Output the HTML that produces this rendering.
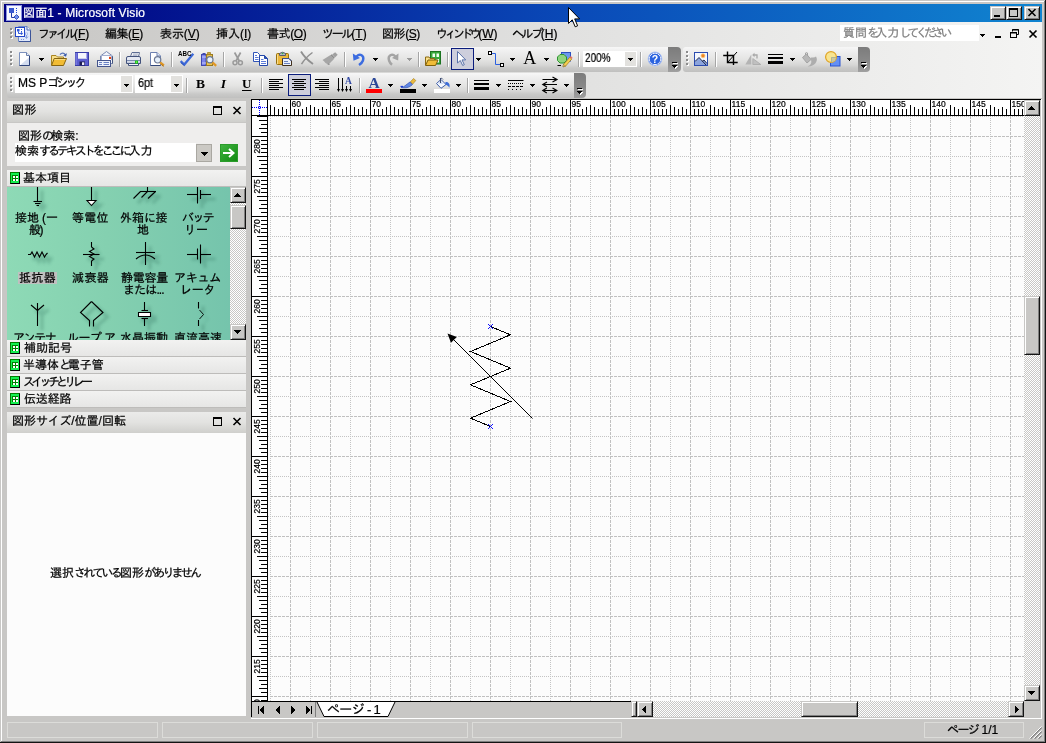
<!DOCTYPE html>
<html lang="ja"><head><meta charset="utf-8"><title>図面1 - Microsoft Visio</title>
<style>
*{box-sizing:border-box;margin:0;padding:0}
html,body{width:1046px;height:743px;overflow:hidden;background:#c8c7c5}
body{position:relative;font-family:"Liberation Sans","IPAGothic",sans-serif;font-size:12px;line-height:12px;color:#000}
.a{position:absolute}
.t{position:absolute;white-space:nowrap;height:12px;line-height:12px;will-change:transform;-webkit-text-stroke-width:.22px}
svg{position:absolute;overflow:visible;will-change:transform}
.btn{position:absolute;background:#c8c7c5;border:1px solid;border-color:#c8c7c5 #141414 #141414 #c8c7c5;box-shadow:inset 1px 1px 0 #fff,inset -1px -1px 0 #808080}
.chk{background-color:#fff;background-image:conic-gradient(#c8c7c5 25%,#fff 0 50%,#c8c7c5 0 75%,#fff 0);background-size:2px 2px}
.tb{position:absolute;height:25px;border-radius:3px 0 0 3px;background:linear-gradient(#f7f7f7 0,#f0f0f0 15%,#e4e4e3 50%,#d6d6d5 72%,#c9c9c8 84%,#c0c0bf 100%)}
.cap{position:absolute;height:25px;border-radius:0 4px 4px 0;background:linear-gradient(#7c7c7c,#8a8a8a 60%,#a0a0a0)}
.sep{position:absolute;width:1px;height:15px;background:#a6a6a6;box-shadow:1px 0 0 #fff}
.grip i{position:absolute;left:0;width:2px;height:2px;background:#8c8c8c;box-shadow:1px 1px 0 #fff}
.sel{position:absolute;border:1px solid #0a1c7c;background:#cdcedc}
.ptitle{position:absolute;height:21px;background:linear-gradient(#ebebea,#e2e2e0 50%,#cfcfcc)}
.shdr{position:absolute;left:7px;width:239px;height:16px;background:linear-gradient(#f2f2f1,#e6e6e5)}
.lbl{position:absolute;width:60px;text-align:center;line-height:12px;white-space:nowrap}
.sp{position:absolute;height:16px;border:1px solid #dcdcd9}
</style></head>
<body>
<div class="a" style="left:1px;top:1px;width:1043px;height:1px;background:#fff"></div>
<div class="a" style="left:1px;top:1px;width:1px;height:740px;background:#fff"></div>
<div class="a" style="left:1044px;top:1px;width:1px;height:741px;background:#808080"></div>
<div class="a" style="left:1px;top:741px;width:1044px;height:1px;background:#808080"></div>
<div class="a" style="left:1045px;top:0px;width:1px;height:743px;background:#141414"></div>
<div class="a" style="left:0px;top:742px;width:1046px;height:1px;background:#141414"></div>
<div class="a" style="left:4px;top:4px;width:1038px;height:18px;background:linear-gradient(to right,#000080 0,#000080 2%,#0a4ab8 55%,#1084d0 100%)"></div>
<svg style="left:6px;top:5px" width="16" height="16" viewBox="0 0 16 16"><rect x="0" y="0" width="16" height="16" fill="#8c94e0"/><rect x="1" y="1" width="14" height="14" fill="#f6f8ff"/><rect x="3" y="3" width="5" height="5" fill="#3858d0"/><path d="M5.5 8V12.5H9" stroke="#2038a8" fill="none"/><path d="M10.500 3V9" stroke="#2048d8" stroke-dasharray="1 1"/><path d="M10.500 9.500L13 12L10.500 14.500L8 12Z" fill="#6c8cf0" stroke="#2038a8" stroke-width=".8"/></svg>
<div class="t" id="title" style="left:23px;top:7px;letter-spacing:0.14px;color:#fff;">図面1 - Microsoft Visio</div>
<div class="btn" style="left:990px;top:6px;width:16px;height:14px;"></div>
<div class="btn" style="left:1006px;top:6px;width:16px;height:14px;"></div>
<div class="btn" style="left:1024px;top:6px;width:16px;height:14px;"></div>
<div class="a" style="left:994px;top:15px;width:6px;height:2px;background:#000"></div>
<div class="a" style="left:1009px;top:8px;width:9px;height:9px;border:1px solid #000;border-top-width:2px"></div>
<svg style="left:1028px;top:9px" width="8" height="7"><path d="M0.5 0 L7.5 7 M7.5 0 L0.5 7" stroke="#000" stroke-width="1.6" fill="none"/></svg>
<div class="a" style="left:4px;top:22px;width:1038px;height:76px;background:linear-gradient(to right,#c8c7c5 0,#cbcac8 8%,#e0e0df 52%,#f4f4f3 100%)"></div>
<div class="a grip" style="left:10px;top:28px;width:3px;height:12px"><i style="top:0px"></i><i style="top:4px"></i><i style="top:8px"></i></div>
<svg style="left:15px;top:26px" width="16" height="16" viewBox="0 0 16 16"><path d="M3.500 0.500H12L15.500 4V15.500H3.500Z" fill="#dfe8fb" stroke="#6c88c8"/><path d="M12 0.500V4H15.500" fill="#f4f8ff" stroke="#4c68b0"/><path d="M4 15.500H15.500V4.500" stroke="#3c5498" fill="none"/><path d="M11.500 7V12M10 10.500L11.500 12.500L13 10.500" stroke="#8ca4dc" fill="none"/><rect x="10.500" y="7" width="2" height="2" fill="#fff" stroke="#8ca4dc" stroke-width=".6"/><path d="M6 13.500H9" stroke="#7c98d8" stroke-dasharray="1 1"/><rect x="0.500" y="1.500" width="9" height="9" fill="#fff" stroke="#2346c8"/><rect x="2" y="3" width="2.500" height="2.500" fill="#2c56d8"/><path d="M3.500 5.500V7.500H5.500" stroke="#2c56d8" fill="none"/><path d="M6.500 6L8 7.500L6.500 9L5 7.500Z" fill="#2c56d8"/><path d="M6.500 3V6" stroke="#2c56d8" stroke-dasharray="1 1"/></svg>
<div class="t" id="m1" style="left:38px;top:28px;"><span style="letter-spacing:-3.02px">ファイル</span>(<u>F</u>)</div>
<div class="t" id="m2" style="left:105px;top:28px;letter-spacing:-0.44px;">編集(<u>E</u>)</div>
<div class="t" id="m3" style="left:160px;top:28px;letter-spacing:-0.07px;">表示(<u>V</u>)</div>
<div class="t" id="m4" style="left:216px;top:28px;">挿入(<u>I</u>)</div>
<div class="t" id="m5" style="left:267px;top:28px;letter-spacing:-0.43px;">書式(<u>O</u>)</div>
<div class="t" id="m6" style="left:322px;top:28px;"><span style="letter-spacing:-2.24px">ツール</span>(<u>T</u>)</div>
<div class="t" id="m7" style="left:382px;top:28px;letter-spacing:-0.43px;">図形(<u>S</u>)</div>
<div class="t" id="m8" style="left:436px;top:28px;"><span style="letter-spacing:-3.56px">ウィンドウ</span>(<u>W</u>)</div>
<div class="t" id="m9" style="left:512px;top:28px;"><span style="letter-spacing:-2.43px">ヘルプ</span>(<u>H</u>)</div>
<div class="a" style="left:840px;top:25px;width:139px;height:16px;background:#fff"></div>
<div class="t" id="ask" style="left:843px;top:27px;color:#808080">質問<span style="letter-spacing:-3.77px">を</span>入力<span style="letter-spacing:-3.77px">してください</span></div>
<div class="a" style="left:980px;top:33.5px;width:5px;height:1px;background:#000"></div><div class="a" style="left:981px;top:34.5px;width:3px;height:1px;background:#000"></div><div class="a" style="left:982px;top:35.5px;width:1px;height:1px;background:#000"></div>
<div class="a" style="left:995px;top:36px;width:6px;height:2px;background:#000"></div>
<svg style="left:1010px;top:29px" width="9" height="9"><path d="M2.5 2.5V0.5H8.5V5.5H6.5" stroke="#000" fill="none"/><path d="M2 1H9" stroke="#000"/><rect x="0.5" y="3.5" width="6" height="5" stroke="#000" fill="none"/><path d="M0 4H7" stroke="#000"/></svg>
<svg style="left:1029px;top:30px" width="8" height="8"><path d="M0.5 0.5 L7.5 7.5 M7.5 0.5 L0.5 7.5" stroke="#000" stroke-width="1.7" fill="none"/></svg>
<div class="tb" style="left:7px;top:47px;width:661px;height:25px;"></div><div class="cap" style="left:668px;top:47px;width:13px;height:25px;"></div><div class="a" style="left:672.5px;top:63px;width:5px;height:1px;background:#fff"></div><div class="a" style="left:672.5px;top:66px;width:5px;height:1px;background:#fff"></div><div class="a" style="left:673.5px;top:67px;width:3px;height:1px;background:#fff"></div><div class="a" style="left:674.5px;top:68px;width:1px;height:1px;background:#fff"></div><div class="a" style="left:671.5px;top:62px;width:5px;height:1px;background:#000"></div><div class="a" style="left:671.5px;top:65px;width:5px;height:1px;background:#000"></div><div class="a" style="left:672.5px;top:66px;width:3px;height:1px;background:#000"></div><div class="a" style="left:673.5px;top:67px;width:1px;height:1px;background:#000"></div>
<div class="tb" style="left:683px;top:47px;width:175px;height:25px;"></div><div class="cap" style="left:858px;top:47px;width:12px;height:25px;"></div><div class="a" style="left:862px;top:63px;width:5px;height:1px;background:#fff"></div><div class="a" style="left:862px;top:66px;width:5px;height:1px;background:#fff"></div><div class="a" style="left:863px;top:67px;width:3px;height:1px;background:#fff"></div><div class="a" style="left:864px;top:68px;width:1px;height:1px;background:#fff"></div><div class="a" style="left:861px;top:62px;width:5px;height:1px;background:#000"></div><div class="a" style="left:861px;top:65px;width:5px;height:1px;background:#000"></div><div class="a" style="left:862px;top:66px;width:3px;height:1px;background:#000"></div><div class="a" style="left:863px;top:67px;width:1px;height:1px;background:#000"></div>
<div class="tb" style="left:7px;top:73px;width:567px;height:25px;"></div><div class="cap" style="left:574px;top:73px;width:12px;height:25px;"></div><div class="a" style="left:578px;top:89px;width:5px;height:1px;background:#fff"></div><div class="a" style="left:578px;top:92px;width:5px;height:1px;background:#fff"></div><div class="a" style="left:579px;top:93px;width:3px;height:1px;background:#fff"></div><div class="a" style="left:580px;top:94px;width:1px;height:1px;background:#fff"></div><div class="a" style="left:577px;top:88px;width:5px;height:1px;background:#000"></div><div class="a" style="left:577px;top:91px;width:5px;height:1px;background:#000"></div><div class="a" style="left:578px;top:92px;width:3px;height:1px;background:#000"></div><div class="a" style="left:579px;top:93px;width:1px;height:1px;background:#000"></div>
<div class="a grip" style="left:10px;top:51px;width:3px;height:16px"><i style="top:0px"></i><i style="top:4px"></i><i style="top:8px"></i><i style="top:12px"></i></div>
<div class="a grip" style="left:686px;top:51px;width:3px;height:16px"><i style="top:0px"></i><i style="top:4px"></i><i style="top:8px"></i><i style="top:12px"></i></div>
<div class="a grip" style="left:10px;top:77px;width:3px;height:16px"><i style="top:0px"></i><i style="top:4px"></i><i style="top:8px"></i><i style="top:12px"></i></div>
<div class="sel" style="left:451px;top:48px;width:23px;height:22px;"></div>
<svg style="left:17px;top:52px" width="16" height="16" viewBox="0 0 16 16"><path d="M2.500 0.500H9.500L12.500 3.500V13.500H2.500Z" fill="#fff" stroke="#7c90bc"/><path d="M4 12.500L12 5.500V13H4Z" fill="#c4d0ea" opacity=".75"/><path d="M9.500 0.500V3.500H12.500" fill="#e6ecf8" stroke="#6c80ac"/><path d="M2.500 13.500H12.500V4" stroke="#30447a" fill="none"/></svg>
<svg style="left:51px;top:52px" width="16" height="16" viewBox="0 0 16 16"><path d="M0.500 13V3.500H5L6.500 5H12.500V7" fill="#f8e08c" stroke="#a88420"/><path d="M0.500 13.500L3.200 6.500H15.500L12.500 13.500Z" fill="#f2bc34" stroke="#866410"/><path d="M3.600 7.500H14.300" stroke="#f8dc80"/><path d="M9 2.600C10.500 0.400 13.500 0.500 14.600 3" stroke="#5874b8" stroke-width="1.200" fill="none"/><path d="M16 1.200L15 4.800L12.200 3.300Z" fill="#3858a8"/></svg>
<svg style="left:74px;top:52px" width="16" height="16" viewBox="0 0 16 16"><rect x="1.500" y="0.500" width="13" height="13" fill="#5c5ed0" stroke="#383ca8"/><path d="M2 1V13" stroke="#8c8ee8"/><rect x="4" y="1" width="8.500" height="6" fill="#f4f5fd"/><path d="M4 6.500H12.500" stroke="#c8ccec"/><rect x="5.500" y="9.500" width="5.500" height="4" fill="#1c1c54"/><rect x="8" y="10.300" width="2.300" height="2.700" fill="#eeeefa"/></svg>
<svg style="left:97px;top:51px" width="16" height="16" viewBox="0 0 16 16"><path d="M3.500 5L9.500 0.500L15.500 5V12.500H3.500Z" fill="#f2f5fc" stroke="#7888b0"/><path d="M4.500 9V4.500H14.500V9" fill="#fff" stroke="#a4b0d0"/><rect x="12" y="5.800" width="2" height="2.200" fill="#e84010"/><path d="M15.500 5.500V12.500" stroke="#44547c"/><rect x="0.500" y="9.500" width="13" height="6" fill="#eef2fb" stroke="#44548c"/><path d="M2 11.500H5M2 13.500H5M6.500 11.500H12M6.500 13.500H12" stroke="#6880c4"/></svg>
<svg style="left:126px;top:52px" width="16" height="16" viewBox="0 0 16 16"><path d="M4.500 4.500L6 0.500H13.500L12.500 4.500Z" fill="#fff" stroke="#5c6c94"/><path d="M7 2H12M6.500 3.300H11.500" stroke="#8c98b8" stroke-width=".8"/><path d="M0.500 6Q0.500 4.500 2 4.500H13Q14.500 4.500 14.500 6V11.500H0.500Z" fill="#e4e8f2" stroke="#42527c"/><path d="M1 8.500H14" stroke="#7c8cb0"/><path d="M1 9.500H14V11H1Z" fill="#c4ccdf"/><path d="M2.500 11.500H12.500V13.500H2.500Z" fill="#f4f6fa" stroke="#42527c"/><rect x="9" y="8.600" width="3" height="3" fill="#18c818"/><rect x="10" y="9.600" width="1" height="1" fill="#b8ff70"/></svg>
<svg style="left:149px;top:52px" width="16" height="16" viewBox="0 0 16 16"><path d="M1.500 0.500H8L11.500 4V13.500H1.500Z" fill="#fff" stroke="#6c80b0"/><path d="M8 0.500V4H11.500" fill="#dfe6f4" stroke="#6c80b0"/><path d="M1.500 13.500H11.500" stroke="#34487a"/><circle cx="8.600" cy="7.800" r="3.200" fill="#e6f0fb" stroke="#6c7894" stroke-width="1.200"/><path d="M11.200 10.400L14.800 13.500" stroke="#e09828" stroke-width="2.400"/><path d="M12.500 12.500L14.800 14.300" stroke="#a86c14" stroke-width="1"/></svg>
<svg style="left:178px;top:51px" width="16" height="16" viewBox="0 0 16 16"><path d="M2.600 10.200L6.300 13.500L15.300 2.800" stroke="#3c68d8" stroke-width="2.300" fill="none"/><path d="M3 11.800L6.300 14.500" stroke="#2448a8" stroke-width=".8" fill="none"/><text x="0" y="5.200" font-family="Liberation Sans,sans-serif" font-size="7" font-weight="bold" fill="#000" textLength="13.500" lengthAdjust="spacingAndGlyphs">ABC</text></svg>
<svg style="left:201px;top:52px" width="16" height="16" viewBox="0 0 16 16"><rect x="0.500" y="2.500" width="4.500" height="11" fill="#7c84ec" stroke="#4048b0"/><path d="M1 5H5M1 11H5" stroke="#c4c8fc"/><path d="M1.500 1.500H4.500" stroke="#4048b0"/><rect x="5.500" y="2.500" width="6" height="11" fill="#ecc450" stroke="#9a7a1e"/><path d="M6.500 0.500V3L8 2L9.500 3V0.500Z" fill="#d8b040" stroke="#9a7a1e" stroke-width=".7"/><circle cx="8.900" cy="7.800" r="3.100" fill="#e8f2fc" stroke="#6c7894" stroke-width="1.200"/><path d="M11.400 10.400L15.200 13.800" stroke="#e09828" stroke-width="2.300"/></svg>
<svg style="left:230px;top:52px" width="16" height="16" viewBox="0 0 16 16"><path d="M4.600 0.500L9.300 9M10.600 0.500L6 9" stroke="#9a9a9a" stroke-width="1.700" fill="none"/><circle cx="5" cy="10.800" r="2" fill="none" stroke="#9a9a9a" stroke-width="1.500"/><circle cx="10.400" cy="10.800" r="2" fill="none" stroke="#9a9a9a" stroke-width="1.500"/></svg>
<svg style="left:253px;top:52px" width="16" height="16" viewBox="0 0 16 16"><path d="M0.500 0.500H4.500L6.500 2.500V9.500H0.500Z" fill="#fff" stroke="#3054b8"/><path d="M2 3.500H4M2 5.500H5.500M2 7.500H5.500" stroke="#5a7ad8"/><path d="M6.500 3.500H11.500L14.500 6.500V13.500H6.500Z" fill="#fff" stroke="#2448a8"/><path d="M11.500 3.500V6.500H14.500" fill="#3054b8" stroke="#2448a8"/><path d="M8 7.500H10.500M8 9.500H13M8 11.500H13" stroke="#5a7ad8"/></svg>
<svg style="left:276px;top:52px" width="16" height="16" viewBox="0 0 16 16"><rect x="0.500" y="1.500" width="12" height="11" rx="1" fill="#ecb83c" stroke="#96700c"/><path d="M1.500 2.500V12" stroke="#f8dc8c"/><path d="M3.500 3.500V1.500Q6.500 -1 9.500 1.500V3.500Z" fill="#b8bcc8" stroke="#585c6c"/><rect x="5.800" y="0.800" width="1.500" height="1.400" fill="#30b040"/><path d="M6.500 6.500H13L15.500 9V13.500H6.500Z" fill="#eaf0fb" stroke="#42301c"/><path d="M6.500 6.500H13L15.500 9" fill="none" stroke="#3c5090"/><path d="M8 9.500H12M8 11.500H14" stroke="#6a82c0"/></svg>
<svg style="left:299px;top:51px" width="16" height="16" viewBox="0 0 16 16"><path d="M2 0.500C4 4 9 9.500 14 13" stroke="#909090" stroke-width="1.800" fill="none"/><path d="M13.500 1.500C10 4 5 9 2.500 13.200" stroke="#909090" stroke-width="1.500" fill="none"/></svg>
<svg style="left:322px;top:52px" width="16" height="16" viewBox="0 0 16 16"><path d="M0.500 8L8.500 3L12 7L6 13Q5 11.500 3.500 11Q2 9 0.500 8Z" fill="#a6a6a6"/><path d="M8.500 3.200L9.800 2.300L12.800 5.800L11.800 6.800Z" fill="#8c8c8c"/><path d="M10.200 2.500L13.200 0.200L15.700 2.700L13 5.600Z" fill="#a0a0a0"/><path d="M6 13L8 12.500L6.500 11Z" fill="#8c8c8c"/></svg>
<svg style="left:351px;top:52px" width="16" height="16" viewBox="0 0 16 16"><path d="M5.500 4.500C9 1 13.500 3.500 12 8.500C11.300 10.500 9.500 12 8 13" stroke="#3c6ce0" stroke-width="2.400" fill="none"/><path d="M1.800 1.500L2.500 8.800L9 6Z" fill="#3c6ce0"/></svg>
<svg style="left:385px;top:52px" width="16" height="16" viewBox="0 0 16 16"><path d="M10.500 4.500C7 1 2.500 3.500 4 8.500C4.700 10.500 6 12 7 12.800" stroke="#a4a4a4" stroke-width="2.400" fill="none"/><path d="M13.500 1.500L13.200 8.600L7 6Z" fill="#a4a4a4"/></svg>
<svg style="left:425px;top:50px" width="16" height="16" viewBox="0 0 16 16"><rect x="5.500" y="1.500" width="10" height="12.500" fill="#38a83c" stroke="#1c7420"/><rect x="7.500" y="3.500" width="2.500" height="3.500" fill="#effff0"/><rect x="11.500" y="3.500" width="2.500" height="3.500" fill="#effff0"/><rect x="11.500" y="9" width="2.500" height="3.500" fill="#effff0"/><path d="M0.500 15V7H4L5 8.500H9.500V10" fill="#f8e08c" stroke="#8d6a12"/><path d="M0.500 15.500L3 10H13L10.500 15.500Z" fill="#f0bc38" stroke="#80600c"/></svg>
<svg style="left:455px;top:51px" width="16" height="16" viewBox="0 0 16 16"><path d="M2.500 0.500V12L5.300 9.500L7.700 14.500L9.300 13.700L7 8.900H10.700Z" fill="#fff" stroke="#5870a8" stroke-width="1"/></svg>
<svg style="left:488px;top:51px" width="16" height="16" viewBox="0 0 16 16"><path d="M3.500 2.500H7.500V13.500H12.500" stroke="#2c60e0" stroke-width="1" fill="none"/><rect x="0.500" y="0.500" width="3" height="3" fill="#fff" stroke="#000"/><rect x="12.500" y="12.500" width="3" height="3" fill="#fff" stroke="#000"/></svg>
<svg style="left:522px;top:52px" width="16" height="16" viewBox="0 0 16 16"><text x="7.700" y="12" text-anchor="middle" font-family="Liberation Serif,serif" font-size="18" fill="#000">A</text></svg>
<svg style="left:556px;top:52px" width="16" height="16" viewBox="0 0 16 16"><rect x="5.500" y="0.500" width="9" height="8.500" fill="#6c98f0" stroke="#2c50c0"/><path d="M4 2.500H8L10.500 5V8.500L8 11H4L1.500 8.500V5Z" fill="#90d480" stroke="#2c9430"/><path d="M7.500 12.500L13.800 5.200L15.800 7L9.500 14.200L7 14.800Z" fill="#f4d050" stroke="#a07818" stroke-width=".7"/><path d="M13.800 5.200L14.800 4L16.600 5.700L15.800 7Z" fill="#e87060"/><path d="M7.500 12.500L7 14.800L9.500 14.200Z" fill="#f0e0c0" stroke="#806010" stroke-width=".5"/><path d="M1.500 13.500H5" stroke="#000"/></svg>
<svg style="left:647px;top:51px" width="16" height="16" viewBox="0 0 16 16"><circle cx="8" cy="7.900" r="6.900" fill="#2458d8" stroke="#b4c8f4" stroke-width="1"/><circle cx="8" cy="7.900" r="5.700" fill="none" stroke="#fff" stroke-width="1" opacity=".9"/><circle cx="8" cy="7.900" r="5.200" fill="#2c64e0"/><text x="8" y="11.800" text-anchor="middle" font-family="Liberation Sans,sans-serif" font-weight="bold" font-size="10.500" fill="#fff">?</text></svg>
<svg style="left:693px;top:52px" width="16" height="16" viewBox="0 0 16 16"><rect x="1.500" y="0.500" width="13" height="13" fill="#f4f7fd" stroke="#2c4cb0"/><path d="M2 8L6.500 13H2Z" fill="#a4b8e4"/><path d="M2 13V9.500L6 5.500L9.500 9.500L11 8L14 11.500V13Z" fill="#8ca4dc"/><circle cx="10" cy="3.800" r="2" fill="#f08424" stroke="#f8c878" stroke-width=".8"/><path d="M2 9.500L6 5.500L13 13M9 9.500L11 8L14 11.500" stroke="#202c50" fill="none"/></svg>
<svg style="left:723px;top:51px" width="16" height="16" viewBox="0 0 16 16"><path d="M4.500 0.500V11.500H14.700M0.200 4.500H10.500V14" stroke="#000" stroke-width="1.400" fill="none"/><path d="M4.500 11.500L14 1" stroke="#000" stroke-width="1"/></svg>
<svg style="left:745px;top:52px" width="16" height="16" viewBox="0 0 16 16"><path d="M0.300 12.500L6.300 2.500V12.500Z" fill="#b4b4b4"/><path d="M7.800 12.500V6.500L15.800 12.500Z" fill="#c0c0c0" stroke="#a8a8a8" stroke-width=".8"/><path d="M9 3H12V6.500" stroke="#a8a8a8" stroke-width="1.300" fill="none"/><path d="M9.500 0.800V5.200L7.200 3Z" fill="#a8a8a8"/></svg>
<svg style="left:768px;top:52px" width="16" height="16" viewBox="0 0 16 16"><rect x="0" y="2" width="15" height="1" fill="#000"/><rect x="0" y="5" width="15" height="2" fill="#000"/><rect x="0" y="9" width="15" height="3" fill="#000"/></svg>
<svg style="left:802px;top:52px" width="16" height="16" viewBox="0 0 16 16"><path d="M0.500 5.500L4.500 2L9 7.500L5 11Z" fill="#b8b8b8" stroke="#a2a2a2"/><path d="M3.500 3V1Q4.500 0 5.500 1V4" stroke="#a2a2a2" fill="none"/><path d="M8 6C10 5 12.500 6 14 4.500C17 9 12 15 5.500 14.500C8.500 13.500 10 11 9 8Z" fill="#adadad"/></svg>
<svg style="left:825px;top:51px" width="16" height="16" viewBox="0 0 16 16"><rect x="5.500" y="5.500" width="9.500" height="9.500" fill="#6490f4" stroke="#2c54d0"/><circle cx="6" cy="6" r="5.400" fill="#f8e490" stroke="#e0a424" stroke-width="1.200"/><path d="M6 6H10.500V9.300Q9.300 10.800 6 11.200Z" fill="#ccc8a0"/><path d="M6.500 11V6.500H11" stroke="#a8b090" fill="none" stroke-width=".8"/></svg>
<div class="a" style="left:39px;top:58px;width:5px;height:1px;background:#000"></div><div class="a" style="left:40px;top:59px;width:3px;height:1px;background:#000"></div><div class="a" style="left:41px;top:60px;width:1px;height:1px;background:#000"></div>
<div class="a" style="left:373px;top:58px;width:5px;height:1px;background:#000"></div><div class="a" style="left:374px;top:59px;width:3px;height:1px;background:#000"></div><div class="a" style="left:375px;top:60px;width:1px;height:1px;background:#000"></div>
<div class="a" style="left:476px;top:58px;width:5px;height:1px;background:#000"></div><div class="a" style="left:477px;top:59px;width:3px;height:1px;background:#000"></div><div class="a" style="left:478px;top:60px;width:1px;height:1px;background:#000"></div>
<div class="a" style="left:510px;top:58px;width:5px;height:1px;background:#000"></div><div class="a" style="left:511px;top:59px;width:3px;height:1px;background:#000"></div><div class="a" style="left:512px;top:60px;width:1px;height:1px;background:#000"></div>
<div class="a" style="left:544px;top:58px;width:5px;height:1px;background:#000"></div><div class="a" style="left:545px;top:59px;width:3px;height:1px;background:#000"></div><div class="a" style="left:546px;top:60px;width:1px;height:1px;background:#000"></div>
<div class="a" style="left:790px;top:58px;width:5px;height:1px;background:#000"></div><div class="a" style="left:791px;top:59px;width:3px;height:1px;background:#000"></div><div class="a" style="left:792px;top:60px;width:1px;height:1px;background:#000"></div>
<div class="a" style="left:847px;top:58px;width:5px;height:1px;background:#000"></div><div class="a" style="left:848px;top:59px;width:3px;height:1px;background:#000"></div><div class="a" style="left:849px;top:60px;width:1px;height:1px;background:#000"></div>
<div class="a" style="left:407px;top:58px;width:5px;height:1px;background:#9a9a9a"></div><div class="a" style="left:408px;top:59px;width:3px;height:1px;background:#9a9a9a"></div><div class="a" style="left:409px;top:60px;width:1px;height:1px;background:#9a9a9a"></div>
<div class="sep" style="left:119px;top:52px;width:1px;height:15px;"></div>
<div class="sep" style="left:171px;top:52px;width:1px;height:15px;"></div>
<div class="sep" style="left:223px;top:52px;width:1px;height:15px;"></div>
<div class="sep" style="left:344px;top:52px;width:1px;height:15px;"></div>
<div class="sep" style="left:418px;top:52px;width:1px;height:15px;"></div>
<div class="sep" style="left:447px;top:52px;width:1px;height:15px;"></div>
<div class="sep" style="left:578px;top:52px;width:1px;height:15px;"></div>
<div class="sep" style="left:640px;top:52px;width:1px;height:15px;"></div>
<div class="sep" style="left:715px;top:52px;width:1px;height:15px;"></div>
<div class="a" style="left:583px;top:51px;width:54px;height:16px;background:#fff"></div>
<div class="a" style="left:625px;top:52px;width:11px;height:14px;background:#e2e1de"></div>
<div class="t" style="left:585px;top:52px;transform:scaleX(.83);transform-origin:0 0">200%</div>
<div class="a" style="left:628px;top:58px;width:5px;height:1px;background:#000"></div><div class="a" style="left:629px;top:59px;width:3px;height:1px;background:#000"></div><div class="a" style="left:630px;top:60px;width:1px;height:1px;background:#000"></div>
<div class="a" style="left:15px;top:75px;width:118px;height:18px;background:#fff"></div>
<div class="a" style="left:121px;top:76px;width:11px;height:16px;background:#e2e1de"></div>
<div class="t" id="font" style="left:18px;top:77px;">MS P<span style="letter-spacing:-2.93px">ゴシック</span></div>
<div class="a" style="left:124px;top:83.5px;width:5px;height:1px;background:#000"></div><div class="a" style="left:125px;top:84.5px;width:3px;height:1px;background:#000"></div><div class="a" style="left:126px;top:85.5px;width:1px;height:1px;background:#000"></div>
<div class="a" style="left:135px;top:75px;width:48px;height:18px;background:#fff"></div>
<div class="a" style="left:171px;top:76px;width:11px;height:16px;background:#e2e1de"></div>
<div class="t" style="left:138px;top:77px;transform:scaleX(.9);transform-origin:0 0">6pt</div>
<div class="a" style="left:174px;top:83.5px;width:5px;height:1px;background:#000"></div><div class="a" style="left:175px;top:84.5px;width:3px;height:1px;background:#000"></div><div class="a" style="left:176px;top:85.5px;width:1px;height:1px;background:#000"></div>
<div class="sel" style="left:288px;top:74px;width:23px;height:22px;"></div>
<svg style="left:192px;top:78px" width="16" height="16" viewBox="0 0 16 16"><text x="8.500" y="10.400" text-anchor="middle" font-family="Liberation Serif,serif" font-weight="bold" font-size="13.500" fill="#000">B</text></svg>
<svg style="left:215px;top:78px" width="16" height="16" viewBox="0 0 16 16"><text x="8.300" y="10.400" text-anchor="middle" font-family="Liberation Serif,serif" font-weight="bold" font-style="italic" font-size="13.500" fill="#000">I</text></svg>
<svg style="left:238px;top:78px" width="16" height="16" viewBox="0 0 16 16"><text x="8.600" y="10.400" text-anchor="middle" font-family="Liberation Serif,serif" font-weight="bold" font-size="13" fill="#000">U</text><rect x="4" y="12" width="9.500" height="1" fill="#000"/></svg>
<svg style="left:268px;top:78px" width="16" height="16" viewBox="0 0 16 16"><rect x="1" y="1" width="14" height="1" fill="#000"/><rect x="1" y="3" width="10" height="1" fill="#000"/><rect x="1" y="5" width="14" height="1" fill="#000"/><rect x="1" y="7" width="10" height="1" fill="#000"/><rect x="1" y="9" width="14" height="1" fill="#000"/><rect x="1" y="11" width="10" height="1" fill="#000"/></svg>
<svg style="left:291px;top:78px" width="16" height="16" viewBox="0 0 16 16"><rect x="1" y="1" width="14" height="1" fill="#000"/><rect x="3" y="3" width="10" height="1" fill="#000"/><rect x="1" y="5" width="14" height="1" fill="#000"/><rect x="3" y="7" width="10" height="1" fill="#000"/><rect x="1" y="9" width="14" height="1" fill="#000"/><rect x="3" y="11" width="10" height="1" fill="#000"/></svg>
<svg style="left:314px;top:78px" width="16" height="16" viewBox="0 0 16 16"><rect x="1" y="1" width="14" height="1" fill="#000"/><rect x="5" y="3" width="10" height="1" fill="#000"/><rect x="1" y="5" width="14" height="1" fill="#000"/><rect x="5" y="7" width="10" height="1" fill="#000"/><rect x="1" y="9" width="14" height="1" fill="#000"/><rect x="5" y="11" width="10" height="1" fill="#000"/></svg>
<svg style="left:337px;top:78px" width="16" height="16" viewBox="0 0 16 16"><path d="M1.500 0V12M5.500 0V12M9.500 8V12M13.500 8V12" stroke="#000" stroke-width="1"/><path d="M0 11H3L1.500 14ZM4 11H7L5.500 14ZM8 11H11L9.500 14ZM12 11H15L13.500 14Z" fill="#000"/><text x="11.500" y="5.800" text-anchor="middle" font-family="Liberation Serif,serif" font-weight="bold" font-size="9.500" fill="#3048a4">A</text></svg>
<svg style="left:366px;top:78px" width="16" height="16" viewBox="0 0 16 16"><text x="8.200" y="9.800" text-anchor="middle" font-family="Liberation Serif,serif" font-weight="bold" font-size="15.500" fill="#2c4898">A</text><rect x="0" y="11" width="16" height="4" fill="#ff0000"/></svg>
<svg style="left:400px;top:78px" width="16" height="16" viewBox="0 0 16 16"><path d="M1 9.500C4 9.500 6 6.500 10 4L12.500 6.500C10 9 7 10 4 9.800Z" fill="#6088e4" stroke="#3050b4" stroke-width=".7"/><path d="M10.500 3.800L13.500 0.500L15.800 2.500L12.800 6Z" fill="#ecbc40" stroke="#a07818" stroke-width=".6"/><path d="M0.500 8.500H3" stroke="#1c3cd8" stroke-width="1.300"/><rect x="0" y="11" width="16" height="4" fill="#000"/></svg>
<svg style="left:434px;top:78px" width="16" height="16" viewBox="0 0 16 16"><path d="M2.500 5.500L7 1.500L12 6.500L7 10.300Z" fill="#f6f9ff" stroke="#3c5ca8"/><path d="M4 6L7 3.200L10 6Z" fill="#d4e0f8"/><path d="M6.500 0V5" stroke="#3c4c70" stroke-width="1.100"/><path d="M6.500 0.500Q8 -0.500 9 1.500" stroke="#3c4c70" fill="none" stroke-width=".8"/><path d="M11.500 4C14.500 3.500 16.500 6 15.300 9.800C14.500 8 13 7 11.300 6.500Z" fill="#3c6cd8"/><rect x="0" y="11" width="16" height="4" fill="#fff"/></svg>
<svg style="left:474px;top:78px" width="16" height="16" viewBox="0 0 16 16"><rect x="0" y="2" width="15" height="1" fill="#000"/><rect x="0" y="5" width="15" height="2" fill="#000"/><rect x="0" y="9" width="15" height="3" fill="#000"/></svg>
<svg style="left:508px;top:78px" width="16" height="16" viewBox="0 0 16 16"><path d="M0 2.500H15.500" stroke="#000"/><path d="M0 5.500H15.500" stroke="#000" stroke-dasharray="1 1"/><path d="M0 8.500H15.500" stroke="#000" stroke-dasharray="3 1"/><path d="M0 11.500H15.500" stroke="#000" stroke-dasharray="1 3"/></svg>
<svg style="left:542px;top:78px" width="16" height="16" viewBox="0 0 16 16"><path d="M0.500 1.500H14M2 6.500H15M1.500 12.500H14" stroke="#000" stroke-width="1.200"/><path d="M10.500 -1L15 1.500L10.500 4M5 4L0.800 6.500L5 9M4.800 10L0.800 12.500L4.800 15M10.500 10L14.800 12.500L10.500 15" stroke="#000" stroke-width="1.200" fill="none"/></svg>
<div class="a" style="left:388px;top:84px;width:5px;height:1px;background:#000"></div><div class="a" style="left:389px;top:85px;width:3px;height:1px;background:#000"></div><div class="a" style="left:390px;top:86px;width:1px;height:1px;background:#000"></div>
<div class="a" style="left:422px;top:84px;width:5px;height:1px;background:#000"></div><div class="a" style="left:423px;top:85px;width:3px;height:1px;background:#000"></div><div class="a" style="left:424px;top:86px;width:1px;height:1px;background:#000"></div>
<div class="a" style="left:456px;top:84px;width:5px;height:1px;background:#000"></div><div class="a" style="left:457px;top:85px;width:3px;height:1px;background:#000"></div><div class="a" style="left:458px;top:86px;width:1px;height:1px;background:#000"></div>
<div class="a" style="left:496px;top:84px;width:5px;height:1px;background:#000"></div><div class="a" style="left:497px;top:85px;width:3px;height:1px;background:#000"></div><div class="a" style="left:498px;top:86px;width:1px;height:1px;background:#000"></div>
<div class="a" style="left:530px;top:84px;width:5px;height:1px;background:#000"></div><div class="a" style="left:531px;top:85px;width:3px;height:1px;background:#000"></div><div class="a" style="left:532px;top:86px;width:1px;height:1px;background:#000"></div>
<div class="a" style="left:564px;top:84px;width:5px;height:1px;background:#000"></div><div class="a" style="left:565px;top:85px;width:3px;height:1px;background:#000"></div><div class="a" style="left:566px;top:86px;width:1px;height:1px;background:#000"></div>
<div class="sep" style="left:186px;top:78px;width:1px;height:15px;"></div>
<div class="sep" style="left:261px;top:78px;width:1px;height:15px;"></div>
<div class="sep" style="left:359px;top:78px;width:1px;height:15px;"></div>
<div class="sep" style="left:467px;top:78px;width:1px;height:15px;"></div>
<div class="ptitle" style="left:7px;top:101px;width:239px;height:21px;"></div><div class="t" id="p1" style="left:12px;top:104px;letter-spacing:0.53px;">図形</div><div class="a" style="left:213px;top:106px;width:9px;height:9px;border:1px solid #000;border-top-width:2px"></div><svg style="left:233px;top:107px" width="8" height="7"><path d="M0.5 0 L7.5 7 M7.5 0 L0.5 7" stroke="#000" stroke-width="1.6" fill="none"/></svg>
<div class="a" style="left:7px;top:123px;width:239px;height:43px;background:#efeeed"></div>
<div class="t" id="srch" style="left:18px;top:130px;">図形<span style="letter-spacing:-2.72px">の</span>検索:</div>
<div class="a" style="left:15px;top:143px;width:181px;height:19px;background:#fff"></div>
<div class="t" id="inp" style="left:15px;top:145px;">検索<span style="letter-spacing:-3.05px">するテキストをここに</span>入力</div>
<div class="a" style="left:196px;top:144px;width:16px;height:18px;background:#cbc9c4;border:1px solid #aaa8a2"></div>
<div class="a" style="left:200.5px;top:151.5px;width:7px;height:1px;background:#000"></div><div class="a" style="left:201.5px;top:152.5px;width:5px;height:1px;background:#000"></div><div class="a" style="left:202.5px;top:153.5px;width:3px;height:1px;background:#000"></div><div class="a" style="left:203.5px;top:154.5px;width:1px;height:1px;background:#000"></div>
<div class="a" style="left:220px;top:144px;width:18px;height:18px;background:linear-gradient(135deg,#3fb33f,#128a12);border:1px solid #2b9c2b"></div>
<svg style="left:223px;top:148px" width="12" height="10"><path d="M0 5H10M6 1L10.5 5L6 9" stroke="#fff" stroke-width="2" fill="none"/></svg>
<div class="shdr" style="left:7px;top:170px;width:239px;height:16px;"></div><div class="a" style="left:10px;top:172px;width:10px;height:12px;background:#14f050;border:1px solid;border-color:#008000 #000 #000 #008000"></div><div class="a" style="left:12px;top:175px;width:6px;height:6px;background:#fff"></div><div class="a" style="left:12px;top:175px;width:6px;height:1px;background:#008000"></div><div class="a" style="left:12px;top:178px;width:6px;height:1px;background:#008000"></div><div class="a" style="left:12px;top:175px;width:1px;height:6px;background:#008000"></div><div class="a" style="left:15px;top:175px;width:1px;height:6px;background:#008000"></div><div class="t" id="h1" style="left:23px;top:172px;">基本項目</div>
<div class="a" style="left:7px;top:186px;width:239px;height:1px;background:#bdbcba"></div>
<div class="a" style="left:7px;top:187px;width:223px;height:153px;overflow:hidden;background:linear-gradient(to right,#8edab6 0,#84d0b0 45%,#75c4ac 100%)"><svg style="left:0;top:0" width="223" height="153"><defs><filter id="stblur" x="-20%" y="-20%" width="140%" height="140%"><feGaussianBlur stdDeviation="1.600"/></filter></defs><g transform="translate(4.500,4.500)" opacity=".27" filter="url(#stblur)"><path d="M30.5 -1L30.5 14.5" stroke="#2f6f5c" stroke-width="3.200" fill="none"/><path d="M26.5 14.5L35 14.5" stroke="#2f6f5c" stroke-width="3.200" fill="none"/><path d="M28 16.5L33.5 16.5" stroke="#2f6f5c" stroke-width="3.200" fill="none"/><path d="M29.5 18.5L32 18.5" stroke="#2f6f5c" stroke-width="3.200" fill="none"/><path d="M84.5 -1L84.5 13.5" stroke="#2f6f5c" stroke-width="3.200" fill="none"/><path d="M80 13.5L89 13.5L84.5 18.5Z" stroke="#2f6f5c" stroke-width="3.200" fill="#2f6f5c"/><path d="M140.5 -1L140.5 4.5" stroke="#2f6f5c" stroke-width="3.200" fill="none"/><path d="M133 4.5L149 4.5" stroke="#2f6f5c" stroke-width="3.200" fill="none"/><path d="M133.5 4.5L126.5 11.5" stroke="#2f6f5c" stroke-width="3.200" fill="none"/><path d="M140.5 4.5L134.5 10.5" stroke="#2f6f5c" stroke-width="3.200" fill="none"/><path d="M148.5 4.5L141 11.5" stroke="#2f6f5c" stroke-width="3.200" fill="none"/><path d="M180 7.5L190.5 7.5" stroke="#2f6f5c" stroke-width="3.200" fill="none"/><path d="M193.5 7.5L204 7.5" stroke="#2f6f5c" stroke-width="3.200" fill="none"/><path d="M190.5 -1L190.5 16.5" stroke="#2f6f5c" stroke-width="3.200" fill="none"/><path d="M193.5 3L193.5 12" stroke="#2f6f5c" stroke-width="3.200" fill="none"/><path d="M21 67.5L23.5 67.5L25 65L27.5 70L30 65L32.5 70L35 65L37.5 70L39 67.5L40.5 66" stroke="#2f6f5c" stroke-width="3.200" fill="none"/><path d="M84.5 55L84.5 60" stroke="#2f6f5c" stroke-width="3.200" fill="none"/><path d="M84.5 60L87 62L82.5 64.5L87 67L82.5 69.5L87 72L84.5 74" stroke="#2f6f5c" stroke-width="3.200" fill="none"/><path d="M84.5 74L84.5 79" stroke="#2f6f5c" stroke-width="3.200" fill="none"/><path d="M76 67.5L92.5 67.5" stroke="#2f6f5c" stroke-width="3.200" fill="none"/><path d="M138.5 55L138.5 78" stroke="#2f6f5c" stroke-width="3.200" fill="none"/><path d="M129 65.5L148 65.5" stroke="#2f6f5c" stroke-width="3.200" fill="none"/><path d="M129 72Q138.5 64 148 72" stroke="#2f6f5c" stroke-width="3.200" fill="none"/><path d="M180 67.5L190.5 67.5" stroke="#2f6f5c" stroke-width="3.200" fill="none"/><path d="M193.5 67.5L204 67.5" stroke="#2f6f5c" stroke-width="3.200" fill="none"/><path d="M190.5 61.5L190.5 72.5" stroke="#2f6f5c" stroke-width="3.200" fill="none"/><path d="M193.5 57.5L193.5 76.5" stroke="#2f6f5c" stroke-width="3.200" fill="none"/><path d="M30.5 116L30.5 139" stroke="#2f6f5c" stroke-width="3.200" fill="none"/><path d="M24 118L30.5 123.5L37 118" stroke="#2f6f5c" stroke-width="3.200" fill="none"/><path d="M84.5 114.5L96 125.5L86.5 133.5L86.5 139.5" stroke="#2f6f5c" stroke-width="3.200" fill="none"/><path d="M84.5 114.5L73.5 125.5L82.5 133.5L82.5 139.5" stroke="#2f6f5c" stroke-width="3.200" fill="none"/><path d="M137.5 115L137.5 123.5" stroke="#2f6f5c" stroke-width="3.200" fill="none"/><path d="M134.5 123.5L141 123.5" stroke="#2f6f5c" stroke-width="3.200" fill="none"/><path d="M131.5 125.5L143.5 125.5L143.5 129.5L131.5 129.5Z" stroke="#2f6f5c" stroke-width="3.200" fill="#2f6f5c"/><path d="M134.5 131.5L141 131.5" stroke="#2f6f5c" stroke-width="3.200" fill="none"/><path d="M137.5 131.5L137.5 139" stroke="#2f6f5c" stroke-width="3.200" fill="none"/><path d="M191.5 115L191.5 121.5" stroke="#2f6f5c" stroke-width="3.200" fill="none"/><path d="M192.5 123L196.5 127.5L192.5 132" stroke="#2f6f5c" stroke-width="0.9" fill="none"/><path d="M191.5 133L191.5 139" stroke="#2f6f5c" stroke-width="3.200" fill="none"/></g><path d="M30.5 -1L30.5 14.5" stroke="#000" stroke-width="1.1" fill="none"/><path d="M26.5 14.5L35 14.5" stroke="#000" stroke-width="1.1" fill="none"/><path d="M28 16.5L33.5 16.5" stroke="#000" stroke-width="1.1" fill="none"/><path d="M29.5 18.5L32 18.5" stroke="#000" stroke-width="1.1" fill="none"/><path d="M84.5 -1L84.5 13.5" stroke="#000" stroke-width="1.1" fill="none"/><path d="M80 13.5L89 13.5L84.5 18.5Z" stroke="#000" stroke-width="1.1" fill="#fff"/><path d="M140.5 -1L140.5 4.5" stroke="#000" stroke-width="1.1" fill="none"/><path d="M133 4.5L149 4.5" stroke="#000" stroke-width="1.1" fill="none"/><path d="M133.5 4.5L126.5 11.5" stroke="#000" stroke-width="1.1" fill="none"/><path d="M140.5 4.5L134.5 10.5" stroke="#000" stroke-width="1.1" fill="none"/><path d="M148.5 4.5L141 11.5" stroke="#000" stroke-width="1.1" fill="none"/><path d="M180 7.5L190.5 7.5" stroke="#000" stroke-width="1.1" fill="none"/><path d="M193.5 7.5L204 7.5" stroke="#000" stroke-width="1.1" fill="none"/><path d="M190.5 -1L190.5 16.5" stroke="#000" stroke-width="1.1" fill="none"/><path d="M193.5 3L193.5 12" stroke="#000" stroke-width="1.1" fill="none"/><path d="M21 67.5L23.5 67.5L25 65L27.5 70L30 65L32.5 70L35 65L37.5 70L39 67.5L40.5 66" stroke="#000" stroke-width="1.1" fill="none"/><path d="M84.5 55L84.5 60" stroke="#000" stroke-width="1.1" fill="none"/><path d="M84.5 60L87 62L82.5 64.5L87 67L82.5 69.5L87 72L84.5 74" stroke="#000" stroke-width="1.1" fill="none"/><path d="M84.5 74L84.5 79" stroke="#000" stroke-width="1.1" fill="none"/><path d="M76 67.5L92.5 67.5" stroke="#000" stroke-width="1.1" fill="none"/><path d="M138.5 55L138.5 78" stroke="#000" stroke-width="1.1" fill="none"/><path d="M129 65.5L148 65.5" stroke="#000" stroke-width="1.1" fill="none"/><path d="M129 72Q138.5 64 148 72" stroke="#000" stroke-width="1.1" fill="none"/><path d="M180 67.5L190.5 67.5" stroke="#000" stroke-width="1.1" fill="none"/><path d="M193.5 67.5L204 67.5" stroke="#000" stroke-width="1.1" fill="none"/><path d="M190.5 61.5L190.5 72.5" stroke="#000" stroke-width="1.1" fill="none"/><path d="M193.5 57.5L193.5 76.5" stroke="#000" stroke-width="1.1" fill="none"/><path d="M30.5 116L30.5 139" stroke="#000" stroke-width="1.1" fill="none"/><path d="M24 118L30.5 123.5L37 118" stroke="#000" stroke-width="1.1" fill="none"/><path d="M84.5 114.5L96 125.5L86.5 133.5L86.5 139.5" stroke="#000" stroke-width="1.1" fill="none"/><path d="M84.5 114.5L73.5 125.5L82.5 133.5L82.5 139.5" stroke="#000" stroke-width="1.1" fill="none"/><path d="M137.5 115L137.5 123.5" stroke="#000" stroke-width="1.1" fill="none"/><path d="M134.5 123.5L141 123.5" stroke="#000" stroke-width="1.1" fill="none"/><path d="M131.5 125.5L143.5 125.5L143.5 129.5L131.5 129.5Z" stroke="#000" stroke-width="1.1" fill="#fff"/><path d="M134.5 131.5L141 131.5" stroke="#000" stroke-width="1.1" fill="none"/><path d="M137.5 131.5L137.5 139" stroke="#000" stroke-width="1.1" fill="none"/><path d="M191.5 115L191.5 121.5" stroke="#000" stroke-width="1.1" fill="none"/><path d="M192.5 123L196.5 127.5L192.5 132" stroke="#000" stroke-width="0.9" fill="none"/><path d="M191.5 133L191.5 139" stroke="#000" stroke-width="1.1" fill="none"/></svg><div class="t" id="s11a" style="left:8px;top:25px;letter-spacing:-0.07px;">接地 (一</div><div class="t" id="s11b" style="left:22px;top:37px;letter-spacing:-1.6px;">般)</div><div class="t" id="s12" style="left:65.4px;top:25px;letter-spacing:0.29px;">等電位</div><div class="t" id="s13a" style="left:112.7px;top:25px;">外箱<span style="letter-spacing:-0.48px">に</span>接</div><div class="t" id="s13b" style="left:130px;top:37px;">地</div><div class="t" id="s14a" style="left:175px;top:25px;"><span style="letter-spacing:-1.6px">バッテ</span></div><div class="t" id="s14b" style="left:177.3px;top:37px;"><span style="letter-spacing:0px">リー</span></div><div class="a" style="left:11px;top:85px;width:39px;height:12px;background:#c0c0c0"></div><div class="t" id="s21" style="left:11.8px;top:85px;letter-spacing:0.35px;">抵抗器</div><div class="t" id="s22" style="left:65px;top:85px;letter-spacing:0.42px;">減衰器</div><div class="t" id="s23a" style="left:113.7px;top:85px;letter-spacing:-0.21px;">静電容量</div><div class="t" id="s23b" style="left:115.7px;top:97px;"><span style="letter-spacing:-0.87px">または...</span></div><div class="t" id="s24a" style="left:166.5px;top:85px;"><span style="letter-spacing:-0.27px">アキュム</span></div><div class="t" id="s24b" style="left:173.3px;top:97px;"><span style="letter-spacing:-0.26px">レータ</span></div><div class="t" id="s31" style="left:5.8px;top:145px;"><span style="letter-spacing:-1.4px">アンテナ</span></div><div class="t" id="s32" style="left:59.6px;top:145px;"><span style="letter-spacing:-0.6px">ループ ア</span></div><div class="t" id="s33" style="left:112.7px;top:145px;">水晶振動</div><div class="t" id="s34" style="left:167.2px;top:145px;">直流高速</div></div><div class="a chk" style="left:230px;top:187px;width:16px;height:153px;"></div><div class="btn" style="left:230px;top:187px;width:16px;height:16px;"></div><div class="a" style="left:234px;top:196px;width:7px;height:1px;background:#000"></div><div class="a" style="left:235px;top:195px;width:5px;height:1px;background:#000"></div><div class="a" style="left:236px;top:194px;width:3px;height:1px;background:#000"></div><div class="a" style="left:237px;top:193px;width:1px;height:1px;background:#000"></div><div class="btn" style="left:230px;top:205px;width:16px;height:24px;"></div><div class="btn" style="left:230px;top:324px;width:16px;height:16px;"></div><div class="a" style="left:234px;top:330px;width:7px;height:1px;background:#000"></div><div class="a" style="left:235px;top:331px;width:5px;height:1px;background:#000"></div><div class="a" style="left:236px;top:332px;width:3px;height:1px;background:#000"></div><div class="a" style="left:237px;top:333px;width:1px;height:1px;background:#000"></div>
<div class="shdr" style="left:7px;top:340px;width:239px;height:16px;"></div><div class="a" style="left:10px;top:342px;width:10px;height:12px;background:#14f050;border:1px solid;border-color:#008000 #000 #000 #008000"></div><div class="a" style="left:12px;top:345px;width:6px;height:6px;background:#fff"></div><div class="a" style="left:12px;top:345px;width:6px;height:1px;background:#008000"></div><div class="a" style="left:12px;top:348px;width:6px;height:1px;background:#008000"></div><div class="a" style="left:12px;top:345px;width:1px;height:6px;background:#008000"></div><div class="a" style="left:15px;top:345px;width:1px;height:6px;background:#008000"></div><div class="t" id="h2" style="left:24px;top:342px;letter-spacing:0.02px;">補助記号</div>
<div class="a" style="left:7px;top:356px;width:239px;height:1px;background:#bdbcba"></div>
<div class="shdr" style="left:7px;top:357px;width:239px;height:16px;"></div><div class="a" style="left:10px;top:359px;width:10px;height:12px;background:#14f050;border:1px solid;border-color:#008000 #000 #000 #008000"></div><div class="a" style="left:12px;top:362px;width:6px;height:6px;background:#fff"></div><div class="a" style="left:12px;top:362px;width:6px;height:1px;background:#008000"></div><div class="a" style="left:12px;top:365px;width:6px;height:1px;background:#008000"></div><div class="a" style="left:12px;top:362px;width:1px;height:6px;background:#008000"></div><div class="a" style="left:15px;top:362px;width:1px;height:6px;background:#008000"></div><div class="t" id="h3" style="left:23px;top:359px;">半導体<span style="letter-spacing:-3.2px">と</span>電子管</div>
<div class="a" style="left:7px;top:373px;width:239px;height:1px;background:#bdbcba"></div>
<div class="shdr" style="left:7px;top:374px;width:239px;height:16px;"></div><div class="a" style="left:10px;top:376px;width:10px;height:12px;background:#14f050;border:1px solid;border-color:#008000 #000 #000 #008000"></div><div class="a" style="left:12px;top:379px;width:6px;height:6px;background:#fff"></div><div class="a" style="left:12px;top:379px;width:6px;height:1px;background:#008000"></div><div class="a" style="left:12px;top:382px;width:6px;height:1px;background:#008000"></div><div class="a" style="left:12px;top:379px;width:1px;height:6px;background:#008000"></div><div class="a" style="left:15px;top:379px;width:1px;height:6px;background:#008000"></div><div class="t" id="h4" style="left:23px;top:376px;"><span style="letter-spacing:-3.73px">スイッチとリレー</span></div>
<div class="a" style="left:7px;top:390px;width:239px;height:1px;background:#bdbcba"></div>
<div class="shdr" style="left:7px;top:391px;width:239px;height:16px;"></div><div class="a" style="left:10px;top:393px;width:10px;height:12px;background:#14f050;border:1px solid;border-color:#008000 #000 #000 #008000"></div><div class="a" style="left:12px;top:396px;width:6px;height:6px;background:#fff"></div><div class="a" style="left:12px;top:396px;width:6px;height:1px;background:#008000"></div><div class="a" style="left:12px;top:399px;width:6px;height:1px;background:#008000"></div><div class="a" style="left:12px;top:396px;width:1px;height:6px;background:#008000"></div><div class="a" style="left:15px;top:396px;width:1px;height:6px;background:#008000"></div><div class="t" id="h5" style="left:24px;top:393px;letter-spacing:-0.14px;">伝送経路</div>
<div class="a" style="left:7px;top:407px;width:239px;height:1px;background:#bdbcba"></div>
<div class="ptitle" style="left:7px;top:412px;width:239px;height:21px;"></div><div class="t" id="p2" style="left:12px;top:415px;">図形<span style="letter-spacing:-0.26px">サイズ</span>/位置/回転</div><div class="a" style="left:213px;top:417px;width:9px;height:9px;border:1px solid #000;border-top-width:2px"></div><svg style="left:233px;top:418px" width="8" height="7"><path d="M0.5 0 L7.5 7 M7.5 0 L0.5 7" stroke="#000" stroke-width="1.6" fill="none"/></svg>
<div class="a" style="left:7px;top:433px;width:239px;height:283px;background:#fcfcfc"></div>
<div class="t" id="nosel" style="left:50px;top:567px;">選択<span style="letter-spacing:-2.8px">されている</span>図形<span style="letter-spacing:-2.8px">がありません</span></div>
<div class="a" style="left:251px;top:99px;width:790px;height:1px;background:#000"></div><div class="a" style="left:251px;top:99px;width:1px;height:618px;background:#000"></div><div class="a" style="left:1041px;top:99px;width:1px;height:620px;background:#fff"></div><div class="a" style="left:251px;top:718px;width:791px;height:1px;background:#fff"></div><div class="a" style="left:252px;top:100px;width:15px;height:15px;background:#fff"></div><div class="a" style="left:252px;top:107px;width:15px;height:1px;background:repeating-linear-gradient(to right,#00f 0 1px,transparent 1px 2px)"></div><div class="a" style="left:259px;top:100px;width:1px;height:15px;background:repeating-linear-gradient(to bottom,#00f 0 1px,transparent 1px 2px)"></div><div class="a" style="left:258px;top:106px;width:3px;height:3px;background:#fff;border:1px solid #00f;border-radius:1px"></div><div class="a" style="left:267px;top:100px;width:1px;height:601px;background:#000"></div><div class="a" style="left:252px;top:115px;width:788px;height:1px;background:#000"></div><svg style="left:268px;top:100px" width="756" height="15" viewBox="0 0 756 15"><rect x="0" y="0" width="756" height="15" fill="#fff"/><rect x="2" y="5" width="1" height="10" fill="#000"/><rect x="6" y="7" width="1" height="8" fill="#000"/><rect x="10" y="9" width="1" height="6" fill="#000"/><rect x="14" y="7" width="1" height="8" fill="#000"/><rect x="18" y="9" width="1" height="6" fill="#000"/><rect x="22" y="0" width="1" height="15" fill="#000"/><rect x="26" y="9" width="1" height="6" fill="#000"/><rect x="30" y="7" width="1" height="8" fill="#000"/><rect x="34" y="9" width="1" height="6" fill="#000"/><rect x="38" y="7" width="1" height="8" fill="#000"/><rect x="42" y="5" width="1" height="10" fill="#000"/><rect x="46" y="7" width="1" height="8" fill="#000"/><rect x="50" y="9" width="1" height="6" fill="#000"/><rect x="54" y="7" width="1" height="8" fill="#000"/><rect x="58" y="9" width="1" height="6" fill="#000"/><rect x="62" y="0" width="1" height="15" fill="#000"/><rect x="66" y="9" width="1" height="6" fill="#000"/><rect x="70" y="7" width="1" height="8" fill="#000"/><rect x="74" y="9" width="1" height="6" fill="#000"/><rect x="78" y="7" width="1" height="8" fill="#000"/><rect x="82" y="5" width="1" height="10" fill="#000"/><rect x="86" y="7" width="1" height="8" fill="#000"/><rect x="90" y="9" width="1" height="6" fill="#000"/><rect x="94" y="7" width="1" height="8" fill="#000"/><rect x="98" y="9" width="1" height="6" fill="#000"/><rect x="102" y="0" width="1" height="15" fill="#000"/><rect x="106" y="9" width="1" height="6" fill="#000"/><rect x="110" y="7" width="1" height="8" fill="#000"/><rect x="114" y="9" width="1" height="6" fill="#000"/><rect x="118" y="7" width="1" height="8" fill="#000"/><rect x="122" y="5" width="1" height="10" fill="#000"/><rect x="126" y="7" width="1" height="8" fill="#000"/><rect x="130" y="9" width="1" height="6" fill="#000"/><rect x="134" y="7" width="1" height="8" fill="#000"/><rect x="138" y="9" width="1" height="6" fill="#000"/><rect x="142" y="0" width="1" height="15" fill="#000"/><rect x="146" y="9" width="1" height="6" fill="#000"/><rect x="150" y="7" width="1" height="8" fill="#000"/><rect x="154" y="9" width="1" height="6" fill="#000"/><rect x="158" y="7" width="1" height="8" fill="#000"/><rect x="162" y="5" width="1" height="10" fill="#000"/><rect x="166" y="7" width="1" height="8" fill="#000"/><rect x="170" y="9" width="1" height="6" fill="#000"/><rect x="174" y="7" width="1" height="8" fill="#000"/><rect x="178" y="9" width="1" height="6" fill="#000"/><rect x="182" y="0" width="1" height="15" fill="#000"/><rect x="186" y="9" width="1" height="6" fill="#000"/><rect x="190" y="7" width="1" height="8" fill="#000"/><rect x="194" y="9" width="1" height="6" fill="#000"/><rect x="198" y="7" width="1" height="8" fill="#000"/><rect x="202" y="5" width="1" height="10" fill="#000"/><rect x="206" y="7" width="1" height="8" fill="#000"/><rect x="210" y="9" width="1" height="6" fill="#000"/><rect x="214" y="7" width="1" height="8" fill="#000"/><rect x="218" y="9" width="1" height="6" fill="#000"/><rect x="222" y="0" width="1" height="15" fill="#000"/><rect x="226" y="9" width="1" height="6" fill="#000"/><rect x="230" y="7" width="1" height="8" fill="#000"/><rect x="234" y="9" width="1" height="6" fill="#000"/><rect x="238" y="7" width="1" height="8" fill="#000"/><rect x="242" y="5" width="1" height="10" fill="#000"/><rect x="246" y="7" width="1" height="8" fill="#000"/><rect x="250" y="9" width="1" height="6" fill="#000"/><rect x="254" y="7" width="1" height="8" fill="#000"/><rect x="258" y="9" width="1" height="6" fill="#000"/><rect x="262" y="0" width="1" height="15" fill="#000"/><rect x="266" y="9" width="1" height="6" fill="#000"/><rect x="270" y="7" width="1" height="8" fill="#000"/><rect x="274" y="9" width="1" height="6" fill="#000"/><rect x="278" y="7" width="1" height="8" fill="#000"/><rect x="282" y="5" width="1" height="10" fill="#000"/><rect x="286" y="7" width="1" height="8" fill="#000"/><rect x="290" y="9" width="1" height="6" fill="#000"/><rect x="294" y="7" width="1" height="8" fill="#000"/><rect x="298" y="9" width="1" height="6" fill="#000"/><rect x="302" y="0" width="1" height="15" fill="#000"/><rect x="306" y="9" width="1" height="6" fill="#000"/><rect x="310" y="7" width="1" height="8" fill="#000"/><rect x="314" y="9" width="1" height="6" fill="#000"/><rect x="318" y="7" width="1" height="8" fill="#000"/><rect x="322" y="5" width="1" height="10" fill="#000"/><rect x="326" y="7" width="1" height="8" fill="#000"/><rect x="330" y="9" width="1" height="6" fill="#000"/><rect x="334" y="7" width="1" height="8" fill="#000"/><rect x="338" y="9" width="1" height="6" fill="#000"/><rect x="342" y="0" width="1" height="15" fill="#000"/><rect x="346" y="9" width="1" height="6" fill="#000"/><rect x="350" y="7" width="1" height="8" fill="#000"/><rect x="354" y="9" width="1" height="6" fill="#000"/><rect x="358" y="7" width="1" height="8" fill="#000"/><rect x="362" y="5" width="1" height="10" fill="#000"/><rect x="366" y="7" width="1" height="8" fill="#000"/><rect x="370" y="9" width="1" height="6" fill="#000"/><rect x="374" y="7" width="1" height="8" fill="#000"/><rect x="378" y="9" width="1" height="6" fill="#000"/><rect x="382" y="0" width="1" height="15" fill="#000"/><rect x="386" y="9" width="1" height="6" fill="#000"/><rect x="390" y="7" width="1" height="8" fill="#000"/><rect x="394" y="9" width="1" height="6" fill="#000"/><rect x="398" y="7" width="1" height="8" fill="#000"/><rect x="402" y="5" width="1" height="10" fill="#000"/><rect x="406" y="7" width="1" height="8" fill="#000"/><rect x="410" y="9" width="1" height="6" fill="#000"/><rect x="414" y="7" width="1" height="8" fill="#000"/><rect x="418" y="9" width="1" height="6" fill="#000"/><rect x="422" y="0" width="1" height="15" fill="#000"/><rect x="426" y="9" width="1" height="6" fill="#000"/><rect x="430" y="7" width="1" height="8" fill="#000"/><rect x="434" y="9" width="1" height="6" fill="#000"/><rect x="438" y="7" width="1" height="8" fill="#000"/><rect x="442" y="5" width="1" height="10" fill="#000"/><rect x="446" y="7" width="1" height="8" fill="#000"/><rect x="450" y="9" width="1" height="6" fill="#000"/><rect x="454" y="7" width="1" height="8" fill="#000"/><rect x="458" y="9" width="1" height="6" fill="#000"/><rect x="462" y="0" width="1" height="15" fill="#000"/><rect x="466" y="9" width="1" height="6" fill="#000"/><rect x="470" y="7" width="1" height="8" fill="#000"/><rect x="474" y="9" width="1" height="6" fill="#000"/><rect x="478" y="7" width="1" height="8" fill="#000"/><rect x="482" y="5" width="1" height="10" fill="#000"/><rect x="486" y="7" width="1" height="8" fill="#000"/><rect x="490" y="9" width="1" height="6" fill="#000"/><rect x="494" y="7" width="1" height="8" fill="#000"/><rect x="498" y="9" width="1" height="6" fill="#000"/><rect x="502" y="0" width="1" height="15" fill="#000"/><rect x="506" y="9" width="1" height="6" fill="#000"/><rect x="510" y="7" width="1" height="8" fill="#000"/><rect x="514" y="9" width="1" height="6" fill="#000"/><rect x="518" y="7" width="1" height="8" fill="#000"/><rect x="522" y="5" width="1" height="10" fill="#000"/><rect x="526" y="7" width="1" height="8" fill="#000"/><rect x="530" y="9" width="1" height="6" fill="#000"/><rect x="534" y="7" width="1" height="8" fill="#000"/><rect x="538" y="9" width="1" height="6" fill="#000"/><rect x="542" y="0" width="1" height="15" fill="#000"/><rect x="546" y="9" width="1" height="6" fill="#000"/><rect x="550" y="7" width="1" height="8" fill="#000"/><rect x="554" y="9" width="1" height="6" fill="#000"/><rect x="558" y="7" width="1" height="8" fill="#000"/><rect x="562" y="5" width="1" height="10" fill="#000"/><rect x="566" y="7" width="1" height="8" fill="#000"/><rect x="570" y="9" width="1" height="6" fill="#000"/><rect x="574" y="7" width="1" height="8" fill="#000"/><rect x="578" y="9" width="1" height="6" fill="#000"/><rect x="582" y="0" width="1" height="15" fill="#000"/><rect x="586" y="9" width="1" height="6" fill="#000"/><rect x="590" y="7" width="1" height="8" fill="#000"/><rect x="594" y="9" width="1" height="6" fill="#000"/><rect x="598" y="7" width="1" height="8" fill="#000"/><rect x="602" y="5" width="1" height="10" fill="#000"/><rect x="606" y="7" width="1" height="8" fill="#000"/><rect x="610" y="9" width="1" height="6" fill="#000"/><rect x="614" y="7" width="1" height="8" fill="#000"/><rect x="618" y="9" width="1" height="6" fill="#000"/><rect x="622" y="0" width="1" height="15" fill="#000"/><rect x="626" y="9" width="1" height="6" fill="#000"/><rect x="630" y="7" width="1" height="8" fill="#000"/><rect x="634" y="9" width="1" height="6" fill="#000"/><rect x="638" y="7" width="1" height="8" fill="#000"/><rect x="642" y="5" width="1" height="10" fill="#000"/><rect x="646" y="7" width="1" height="8" fill="#000"/><rect x="650" y="9" width="1" height="6" fill="#000"/><rect x="654" y="7" width="1" height="8" fill="#000"/><rect x="658" y="9" width="1" height="6" fill="#000"/><rect x="662" y="0" width="1" height="15" fill="#000"/><rect x="666" y="9" width="1" height="6" fill="#000"/><rect x="670" y="7" width="1" height="8" fill="#000"/><rect x="674" y="9" width="1" height="6" fill="#000"/><rect x="678" y="7" width="1" height="8" fill="#000"/><rect x="682" y="5" width="1" height="10" fill="#000"/><rect x="686" y="7" width="1" height="8" fill="#000"/><rect x="690" y="9" width="1" height="6" fill="#000"/><rect x="694" y="7" width="1" height="8" fill="#000"/><rect x="698" y="9" width="1" height="6" fill="#000"/><rect x="702" y="0" width="1" height="15" fill="#000"/><rect x="706" y="9" width="1" height="6" fill="#000"/><rect x="710" y="7" width="1" height="8" fill="#000"/><rect x="714" y="9" width="1" height="6" fill="#000"/><rect x="718" y="7" width="1" height="8" fill="#000"/><rect x="722" y="5" width="1" height="10" fill="#000"/><rect x="726" y="7" width="1" height="8" fill="#000"/><rect x="730" y="9" width="1" height="6" fill="#000"/><rect x="734" y="7" width="1" height="8" fill="#000"/><rect x="738" y="9" width="1" height="6" fill="#000"/><rect x="742" y="0" width="1" height="15" fill="#000"/><rect x="746" y="9" width="1" height="6" fill="#000"/><rect x="750" y="7" width="1" height="8" fill="#000"/><rect x="754" y="9" width="1" height="6" fill="#000"/><rect x="23" y="0" width="11" height="9" fill="#fff"/><rect x="63" y="0" width="11" height="9" fill="#fff"/><rect x="103" y="0" width="11" height="9" fill="#fff"/><rect x="143" y="0" width="11" height="9" fill="#fff"/><rect x="183" y="0" width="11" height="9" fill="#fff"/><rect x="223" y="0" width="11" height="9" fill="#fff"/><rect x="263" y="0" width="11" height="9" fill="#fff"/><rect x="303" y="0" width="11" height="9" fill="#fff"/><rect x="343" y="0" width="16" height="9" fill="#fff"/><rect x="383" y="0" width="16" height="9" fill="#fff"/><rect x="423" y="0" width="16" height="9" fill="#fff"/><rect x="463" y="0" width="16" height="9" fill="#fff"/><rect x="503" y="0" width="16" height="9" fill="#fff"/><rect x="543" y="0" width="16" height="9" fill="#fff"/><rect x="583" y="0" width="16" height="9" fill="#fff"/><rect x="623" y="0" width="16" height="9" fill="#fff"/><rect x="663" y="0" width="16" height="9" fill="#fff"/><rect x="703" y="0" width="16" height="9" fill="#fff"/><rect x="743" y="0" width="16" height="9" fill="#fff"/><text x="23.6" y="7" font-size="8.5" font-family="Liberation Sans,sans-serif" fill="#000" stroke="#000" stroke-width=".2">60</text><text x="63.6" y="7" font-size="8.5" font-family="Liberation Sans,sans-serif" fill="#000" stroke="#000" stroke-width=".2">65</text><text x="103.6" y="7" font-size="8.5" font-family="Liberation Sans,sans-serif" fill="#000" stroke="#000" stroke-width=".2">70</text><text x="143.6" y="7" font-size="8.5" font-family="Liberation Sans,sans-serif" fill="#000" stroke="#000" stroke-width=".2">75</text><text x="183.6" y="7" font-size="8.5" font-family="Liberation Sans,sans-serif" fill="#000" stroke="#000" stroke-width=".2">80</text><text x="223.6" y="7" font-size="8.5" font-family="Liberation Sans,sans-serif" fill="#000" stroke="#000" stroke-width=".2">85</text><text x="263.6" y="7" font-size="8.5" font-family="Liberation Sans,sans-serif" fill="#000" stroke="#000" stroke-width=".2">90</text><text x="303.6" y="7" font-size="8.5" font-family="Liberation Sans,sans-serif" fill="#000" stroke="#000" stroke-width=".2">95</text><text x="343.6" y="7" font-size="8.5" font-family="Liberation Sans,sans-serif" fill="#000" stroke="#000" stroke-width=".2">100</text><text x="383.6" y="7" font-size="8.5" font-family="Liberation Sans,sans-serif" fill="#000" stroke="#000" stroke-width=".2">105</text><text x="423.6" y="7" font-size="8.5" font-family="Liberation Sans,sans-serif" fill="#000" stroke="#000" stroke-width=".2">110</text><text x="463.6" y="7" font-size="8.5" font-family="Liberation Sans,sans-serif" fill="#000" stroke="#000" stroke-width=".2">115</text><text x="503.6" y="7" font-size="8.5" font-family="Liberation Sans,sans-serif" fill="#000" stroke="#000" stroke-width=".2">120</text><text x="543.6" y="7" font-size="8.5" font-family="Liberation Sans,sans-serif" fill="#000" stroke="#000" stroke-width=".2">125</text><text x="583.6" y="7" font-size="8.5" font-family="Liberation Sans,sans-serif" fill="#000" stroke="#000" stroke-width=".2">130</text><text x="623.6" y="7" font-size="8.5" font-family="Liberation Sans,sans-serif" fill="#000" stroke="#000" stroke-width=".2">135</text><text x="663.6" y="7" font-size="8.5" font-family="Liberation Sans,sans-serif" fill="#000" stroke="#000" stroke-width=".2">140</text><text x="703.6" y="7" font-size="8.5" font-family="Liberation Sans,sans-serif" fill="#000" stroke="#000" stroke-width=".2">145</text><text x="743.6" y="7" font-size="8.5" font-family="Liberation Sans,sans-serif" fill="#000" stroke="#000" stroke-width=".2">150</text></svg><svg style="left:252px;top:116px" width="15" height="585" viewBox="0 0 15 585"><rect x="0" y="0" width="15" height="585" fill="#fff"/><rect x="5" y="0" width="10" height="1" fill="#000"/><rect x="7" y="4" width="8" height="1" fill="#000"/><rect x="9" y="8" width="6" height="1" fill="#000"/><rect x="7" y="12" width="8" height="1" fill="#000"/><rect x="9" y="16" width="6" height="1" fill="#000"/><rect x="0" y="20" width="15" height="1" fill="#000"/><rect x="9" y="24" width="6" height="1" fill="#000"/><rect x="7" y="28" width="8" height="1" fill="#000"/><rect x="9" y="32" width="6" height="1" fill="#000"/><rect x="7" y="36" width="8" height="1" fill="#000"/><rect x="5" y="40" width="10" height="1" fill="#000"/><rect x="7" y="44" width="8" height="1" fill="#000"/><rect x="9" y="48" width="6" height="1" fill="#000"/><rect x="7" y="52" width="8" height="1" fill="#000"/><rect x="9" y="56" width="6" height="1" fill="#000"/><rect x="0" y="60" width="15" height="1" fill="#000"/><rect x="9" y="64" width="6" height="1" fill="#000"/><rect x="7" y="68" width="8" height="1" fill="#000"/><rect x="9" y="72" width="6" height="1" fill="#000"/><rect x="7" y="76" width="8" height="1" fill="#000"/><rect x="5" y="80" width="10" height="1" fill="#000"/><rect x="7" y="84" width="8" height="1" fill="#000"/><rect x="9" y="88" width="6" height="1" fill="#000"/><rect x="7" y="92" width="8" height="1" fill="#000"/><rect x="9" y="96" width="6" height="1" fill="#000"/><rect x="0" y="100" width="15" height="1" fill="#000"/><rect x="9" y="104" width="6" height="1" fill="#000"/><rect x="7" y="108" width="8" height="1" fill="#000"/><rect x="9" y="112" width="6" height="1" fill="#000"/><rect x="7" y="116" width="8" height="1" fill="#000"/><rect x="5" y="120" width="10" height="1" fill="#000"/><rect x="7" y="124" width="8" height="1" fill="#000"/><rect x="9" y="128" width="6" height="1" fill="#000"/><rect x="7" y="132" width="8" height="1" fill="#000"/><rect x="9" y="136" width="6" height="1" fill="#000"/><rect x="0" y="140" width="15" height="1" fill="#000"/><rect x="9" y="144" width="6" height="1" fill="#000"/><rect x="7" y="148" width="8" height="1" fill="#000"/><rect x="9" y="152" width="6" height="1" fill="#000"/><rect x="7" y="156" width="8" height="1" fill="#000"/><rect x="5" y="160" width="10" height="1" fill="#000"/><rect x="7" y="164" width="8" height="1" fill="#000"/><rect x="9" y="168" width="6" height="1" fill="#000"/><rect x="7" y="172" width="8" height="1" fill="#000"/><rect x="9" y="176" width="6" height="1" fill="#000"/><rect x="0" y="180" width="15" height="1" fill="#000"/><rect x="9" y="184" width="6" height="1" fill="#000"/><rect x="7" y="188" width="8" height="1" fill="#000"/><rect x="9" y="192" width="6" height="1" fill="#000"/><rect x="7" y="196" width="8" height="1" fill="#000"/><rect x="5" y="200" width="10" height="1" fill="#000"/><rect x="7" y="204" width="8" height="1" fill="#000"/><rect x="9" y="208" width="6" height="1" fill="#000"/><rect x="7" y="212" width="8" height="1" fill="#000"/><rect x="9" y="216" width="6" height="1" fill="#000"/><rect x="0" y="220" width="15" height="1" fill="#000"/><rect x="9" y="224" width="6" height="1" fill="#000"/><rect x="7" y="228" width="8" height="1" fill="#000"/><rect x="9" y="232" width="6" height="1" fill="#000"/><rect x="7" y="236" width="8" height="1" fill="#000"/><rect x="5" y="240" width="10" height="1" fill="#000"/><rect x="7" y="244" width="8" height="1" fill="#000"/><rect x="9" y="248" width="6" height="1" fill="#000"/><rect x="7" y="252" width="8" height="1" fill="#000"/><rect x="9" y="256" width="6" height="1" fill="#000"/><rect x="0" y="260" width="15" height="1" fill="#000"/><rect x="9" y="264" width="6" height="1" fill="#000"/><rect x="7" y="268" width="8" height="1" fill="#000"/><rect x="9" y="272" width="6" height="1" fill="#000"/><rect x="7" y="276" width="8" height="1" fill="#000"/><rect x="5" y="280" width="10" height="1" fill="#000"/><rect x="7" y="284" width="8" height="1" fill="#000"/><rect x="9" y="288" width="6" height="1" fill="#000"/><rect x="7" y="292" width="8" height="1" fill="#000"/><rect x="9" y="296" width="6" height="1" fill="#000"/><rect x="0" y="300" width="15" height="1" fill="#000"/><rect x="9" y="304" width="6" height="1" fill="#000"/><rect x="7" y="308" width="8" height="1" fill="#000"/><rect x="9" y="312" width="6" height="1" fill="#000"/><rect x="7" y="316" width="8" height="1" fill="#000"/><rect x="5" y="320" width="10" height="1" fill="#000"/><rect x="7" y="324" width="8" height="1" fill="#000"/><rect x="9" y="328" width="6" height="1" fill="#000"/><rect x="7" y="332" width="8" height="1" fill="#000"/><rect x="9" y="336" width="6" height="1" fill="#000"/><rect x="0" y="340" width="15" height="1" fill="#000"/><rect x="9" y="344" width="6" height="1" fill="#000"/><rect x="7" y="348" width="8" height="1" fill="#000"/><rect x="9" y="352" width="6" height="1" fill="#000"/><rect x="7" y="356" width="8" height="1" fill="#000"/><rect x="5" y="360" width="10" height="1" fill="#000"/><rect x="7" y="364" width="8" height="1" fill="#000"/><rect x="9" y="368" width="6" height="1" fill="#000"/><rect x="7" y="372" width="8" height="1" fill="#000"/><rect x="9" y="376" width="6" height="1" fill="#000"/><rect x="0" y="380" width="15" height="1" fill="#000"/><rect x="9" y="384" width="6" height="1" fill="#000"/><rect x="7" y="388" width="8" height="1" fill="#000"/><rect x="9" y="392" width="6" height="1" fill="#000"/><rect x="7" y="396" width="8" height="1" fill="#000"/><rect x="5" y="400" width="10" height="1" fill="#000"/><rect x="7" y="404" width="8" height="1" fill="#000"/><rect x="9" y="408" width="6" height="1" fill="#000"/><rect x="7" y="412" width="8" height="1" fill="#000"/><rect x="9" y="416" width="6" height="1" fill="#000"/><rect x="0" y="420" width="15" height="1" fill="#000"/><rect x="9" y="424" width="6" height="1" fill="#000"/><rect x="7" y="428" width="8" height="1" fill="#000"/><rect x="9" y="432" width="6" height="1" fill="#000"/><rect x="7" y="436" width="8" height="1" fill="#000"/><rect x="5" y="440" width="10" height="1" fill="#000"/><rect x="7" y="444" width="8" height="1" fill="#000"/><rect x="9" y="448" width="6" height="1" fill="#000"/><rect x="7" y="452" width="8" height="1" fill="#000"/><rect x="9" y="456" width="6" height="1" fill="#000"/><rect x="0" y="460" width="15" height="1" fill="#000"/><rect x="9" y="464" width="6" height="1" fill="#000"/><rect x="7" y="468" width="8" height="1" fill="#000"/><rect x="9" y="472" width="6" height="1" fill="#000"/><rect x="7" y="476" width="8" height="1" fill="#000"/><rect x="5" y="480" width="10" height="1" fill="#000"/><rect x="7" y="484" width="8" height="1" fill="#000"/><rect x="9" y="488" width="6" height="1" fill="#000"/><rect x="7" y="492" width="8" height="1" fill="#000"/><rect x="9" y="496" width="6" height="1" fill="#000"/><rect x="0" y="500" width="15" height="1" fill="#000"/><rect x="9" y="504" width="6" height="1" fill="#000"/><rect x="7" y="508" width="8" height="1" fill="#000"/><rect x="9" y="512" width="6" height="1" fill="#000"/><rect x="7" y="516" width="8" height="1" fill="#000"/><rect x="5" y="520" width="10" height="1" fill="#000"/><rect x="7" y="524" width="8" height="1" fill="#000"/><rect x="9" y="528" width="6" height="1" fill="#000"/><rect x="7" y="532" width="8" height="1" fill="#000"/><rect x="9" y="536" width="6" height="1" fill="#000"/><rect x="0" y="540" width="15" height="1" fill="#000"/><rect x="9" y="544" width="6" height="1" fill="#000"/><rect x="7" y="548" width="8" height="1" fill="#000"/><rect x="9" y="552" width="6" height="1" fill="#000"/><rect x="7" y="556" width="8" height="1" fill="#000"/><rect x="5" y="560" width="10" height="1" fill="#000"/><rect x="7" y="564" width="8" height="1" fill="#000"/><rect x="9" y="568" width="6" height="1" fill="#000"/><rect x="7" y="572" width="8" height="1" fill="#000"/><rect x="9" y="576" width="6" height="1" fill="#000"/><rect x="0" y="580" width="15" height="1" fill="#000"/><rect x="9" y="584" width="6" height="1" fill="#000"/><rect x="0" y="21" width="9" height="17" fill="#fff"/><rect x="0" y="61" width="9" height="17" fill="#fff"/><rect x="0" y="101" width="9" height="17" fill="#fff"/><rect x="0" y="141" width="9" height="17" fill="#fff"/><rect x="0" y="181" width="9" height="17" fill="#fff"/><rect x="0" y="221" width="9" height="17" fill="#fff"/><rect x="0" y="261" width="9" height="17" fill="#fff"/><rect x="0" y="301" width="9" height="17" fill="#fff"/><rect x="0" y="341" width="9" height="17" fill="#fff"/><rect x="0" y="381" width="9" height="17" fill="#fff"/><rect x="0" y="421" width="9" height="17" fill="#fff"/><rect x="0" y="461" width="9" height="17" fill="#fff"/><rect x="0" y="501" width="9" height="17" fill="#fff"/><rect x="0" y="541" width="9" height="17" fill="#fff"/><rect x="0" y="581" width="9" height="17" fill="#fff"/><text transform="translate(8,37.4) rotate(-90)" font-size="8.5" font-family="Liberation Sans,sans-serif" fill="#000" stroke="#000" stroke-width=".2">280</text><text transform="translate(8,77.4) rotate(-90)" font-size="8.5" font-family="Liberation Sans,sans-serif" fill="#000" stroke="#000" stroke-width=".2">275</text><text transform="translate(8,117.4) rotate(-90)" font-size="8.5" font-family="Liberation Sans,sans-serif" fill="#000" stroke="#000" stroke-width=".2">270</text><text transform="translate(8,157.4) rotate(-90)" font-size="8.5" font-family="Liberation Sans,sans-serif" fill="#000" stroke="#000" stroke-width=".2">265</text><text transform="translate(8,197.4) rotate(-90)" font-size="8.5" font-family="Liberation Sans,sans-serif" fill="#000" stroke="#000" stroke-width=".2">260</text><text transform="translate(8,237.4) rotate(-90)" font-size="8.5" font-family="Liberation Sans,sans-serif" fill="#000" stroke="#000" stroke-width=".2">255</text><text transform="translate(8,277.4) rotate(-90)" font-size="8.5" font-family="Liberation Sans,sans-serif" fill="#000" stroke="#000" stroke-width=".2">250</text><text transform="translate(8,317.4) rotate(-90)" font-size="8.5" font-family="Liberation Sans,sans-serif" fill="#000" stroke="#000" stroke-width=".2">245</text><text transform="translate(8,357.4) rotate(-90)" font-size="8.5" font-family="Liberation Sans,sans-serif" fill="#000" stroke="#000" stroke-width=".2">240</text><text transform="translate(8,397.4) rotate(-90)" font-size="8.5" font-family="Liberation Sans,sans-serif" fill="#000" stroke="#000" stroke-width=".2">235</text><text transform="translate(8,437.4) rotate(-90)" font-size="8.5" font-family="Liberation Sans,sans-serif" fill="#000" stroke="#000" stroke-width=".2">230</text><text transform="translate(8,477.4) rotate(-90)" font-size="8.5" font-family="Liberation Sans,sans-serif" fill="#000" stroke="#000" stroke-width=".2">225</text><text transform="translate(8,517.4) rotate(-90)" font-size="8.5" font-family="Liberation Sans,sans-serif" fill="#000" stroke="#000" stroke-width=".2">220</text><text transform="translate(8,557.4) rotate(-90)" font-size="8.5" font-family="Liberation Sans,sans-serif" fill="#000" stroke="#000" stroke-width=".2">215</text><text transform="translate(8,597.4) rotate(-90)" font-size="8.5" font-family="Liberation Sans,sans-serif" fill="#000" stroke="#000" stroke-width=".2">210</text></svg><svg style="left:268px;top:116px" width="756" height="585" viewBox="0 0 756 585" shape-rendering="crispEdges"><rect x="0" y="0" width="756" height="585" fill="#fcfcfc"/><path d="M2.5 0V585" stroke="#c4c4c4" stroke-dasharray="1 1" stroke-dashoffset="0"/><path d="M22.5 0V585" stroke="#c0c0c0" stroke-dasharray="3 1" stroke-dashoffset="0"/><path d="M42.5 0V585" stroke="#c4c4c4" stroke-dasharray="1 1" stroke-dashoffset="0"/><path d="M62.5 0V585" stroke="#c0c0c0" stroke-dasharray="3 1" stroke-dashoffset="0"/><path d="M82.5 0V585" stroke="#c4c4c4" stroke-dasharray="1 1" stroke-dashoffset="0"/><path d="M102.5 0V585" stroke="#c0c0c0" stroke-dasharray="3 1" stroke-dashoffset="0"/><path d="M122.5 0V585" stroke="#c4c4c4" stroke-dasharray="1 1" stroke-dashoffset="0"/><path d="M142.5 0V585" stroke="#c0c0c0" stroke-dasharray="3 1" stroke-dashoffset="0"/><path d="M162.5 0V585" stroke="#c4c4c4" stroke-dasharray="1 1" stroke-dashoffset="0"/><path d="M182.5 0V585" stroke="#c0c0c0" stroke-dasharray="3 1" stroke-dashoffset="0"/><path d="M202.5 0V585" stroke="#c4c4c4" stroke-dasharray="1 1" stroke-dashoffset="0"/><path d="M222.5 0V585" stroke="#c0c0c0" stroke-dasharray="3 1" stroke-dashoffset="0"/><path d="M242.5 0V585" stroke="#c4c4c4" stroke-dasharray="1 1" stroke-dashoffset="0"/><path d="M262.5 0V585" stroke="#c0c0c0" stroke-dasharray="3 1" stroke-dashoffset="0"/><path d="M282.5 0V585" stroke="#c4c4c4" stroke-dasharray="1 1" stroke-dashoffset="0"/><path d="M302.5 0V585" stroke="#c0c0c0" stroke-dasharray="3 1" stroke-dashoffset="0"/><path d="M322.5 0V585" stroke="#c4c4c4" stroke-dasharray="1 1" stroke-dashoffset="0"/><path d="M342.5 0V585" stroke="#c0c0c0" stroke-dasharray="3 1" stroke-dashoffset="0"/><path d="M362.5 0V585" stroke="#c4c4c4" stroke-dasharray="1 1" stroke-dashoffset="0"/><path d="M382.5 0V585" stroke="#c0c0c0" stroke-dasharray="3 1" stroke-dashoffset="0"/><path d="M402.5 0V585" stroke="#c4c4c4" stroke-dasharray="1 1" stroke-dashoffset="0"/><path d="M422.5 0V585" stroke="#c0c0c0" stroke-dasharray="3 1" stroke-dashoffset="0"/><path d="M442.5 0V585" stroke="#c4c4c4" stroke-dasharray="1 1" stroke-dashoffset="0"/><path d="M462.5 0V585" stroke="#c0c0c0" stroke-dasharray="3 1" stroke-dashoffset="0"/><path d="M482.5 0V585" stroke="#c4c4c4" stroke-dasharray="1 1" stroke-dashoffset="0"/><path d="M502.5 0V585" stroke="#c0c0c0" stroke-dasharray="3 1" stroke-dashoffset="0"/><path d="M522.5 0V585" stroke="#c4c4c4" stroke-dasharray="1 1" stroke-dashoffset="0"/><path d="M542.5 0V585" stroke="#c0c0c0" stroke-dasharray="3 1" stroke-dashoffset="0"/><path d="M562.5 0V585" stroke="#c4c4c4" stroke-dasharray="1 1" stroke-dashoffset="0"/><path d="M582.5 0V585" stroke="#c0c0c0" stroke-dasharray="3 1" stroke-dashoffset="0"/><path d="M602.5 0V585" stroke="#c4c4c4" stroke-dasharray="1 1" stroke-dashoffset="0"/><path d="M622.5 0V585" stroke="#c0c0c0" stroke-dasharray="3 1" stroke-dashoffset="0"/><path d="M642.5 0V585" stroke="#c4c4c4" stroke-dasharray="1 1" stroke-dashoffset="0"/><path d="M662.5 0V585" stroke="#c0c0c0" stroke-dasharray="3 1" stroke-dashoffset="0"/><path d="M682.5 0V585" stroke="#c4c4c4" stroke-dasharray="1 1" stroke-dashoffset="0"/><path d="M702.5 0V585" stroke="#c0c0c0" stroke-dasharray="3 1" stroke-dashoffset="0"/><path d="M722.5 0V585" stroke="#c4c4c4" stroke-dasharray="1 1" stroke-dashoffset="0"/><path d="M742.5 0V585" stroke="#c0c0c0" stroke-dasharray="3 1" stroke-dashoffset="0"/><path d="M0 0.5H756" stroke="#c4c4c4" stroke-dasharray="1 1"/><path d="M2 20.5H756" stroke="#c0c0c0" stroke-dasharray="3 1"/><path d="M0 40.5H756" stroke="#c4c4c4" stroke-dasharray="1 1"/><path d="M2 60.5H756" stroke="#c0c0c0" stroke-dasharray="3 1"/><path d="M0 80.5H756" stroke="#c4c4c4" stroke-dasharray="1 1"/><path d="M2 100.5H756" stroke="#c0c0c0" stroke-dasharray="3 1"/><path d="M0 120.5H756" stroke="#c4c4c4" stroke-dasharray="1 1"/><path d="M2 140.5H756" stroke="#c0c0c0" stroke-dasharray="3 1"/><path d="M0 160.5H756" stroke="#c4c4c4" stroke-dasharray="1 1"/><path d="M2 180.5H756" stroke="#c0c0c0" stroke-dasharray="3 1"/><path d="M0 200.5H756" stroke="#c4c4c4" stroke-dasharray="1 1"/><path d="M2 220.5H756" stroke="#c0c0c0" stroke-dasharray="3 1"/><path d="M0 240.5H756" stroke="#c4c4c4" stroke-dasharray="1 1"/><path d="M2 260.5H756" stroke="#c0c0c0" stroke-dasharray="3 1"/><path d="M0 280.5H756" stroke="#c4c4c4" stroke-dasharray="1 1"/><path d="M2 300.5H756" stroke="#c0c0c0" stroke-dasharray="3 1"/><path d="M0 320.5H756" stroke="#c4c4c4" stroke-dasharray="1 1"/><path d="M2 340.5H756" stroke="#c0c0c0" stroke-dasharray="3 1"/><path d="M0 360.5H756" stroke="#c4c4c4" stroke-dasharray="1 1"/><path d="M2 380.5H756" stroke="#c0c0c0" stroke-dasharray="3 1"/><path d="M0 400.5H756" stroke="#c4c4c4" stroke-dasharray="1 1"/><path d="M2 420.5H756" stroke="#c0c0c0" stroke-dasharray="3 1"/><path d="M0 440.5H756" stroke="#c4c4c4" stroke-dasharray="1 1"/><path d="M2 460.5H756" stroke="#c0c0c0" stroke-dasharray="3 1"/><path d="M0 480.5H756" stroke="#c4c4c4" stroke-dasharray="1 1"/><path d="M2 500.5H756" stroke="#c0c0c0" stroke-dasharray="3 1"/><path d="M0 520.5H756" stroke="#c4c4c4" stroke-dasharray="1 1"/><path d="M2 540.5H756" stroke="#c0c0c0" stroke-dasharray="3 1"/><path d="M0 560.5H756" stroke="#c4c4c4" stroke-dasharray="1 1"/><path d="M2 580.5H756" stroke="#c0c0c0" stroke-dasharray="3 1"/><path d="M222.5 210.5L242.5 218.8L202.5 235.5L242.5 252.2L202.5 268.8L242.5 285.5L202.5 302.2L222.5 310.5" stroke="#000" stroke-width="1" fill="none"/><g shape-rendering="auto"><path d="M264.5 302.5L184 222" stroke="#000" stroke-width="1" fill="none"/><path d="M179.5 217.5L188.8 221L183 226.8Z" fill="#000"/><path d="M220 208L225 213M225 208L220 213" stroke="#1010ff" stroke-width="1"/><path d="M220 308L225 313M225 308L220 313" stroke="#1010ff" stroke-width="1"/></g></svg><div class="a chk" style="left:1024px;top:100px;width:16px;height:601px;"></div><div class="btn" style="left:1024px;top:100px;width:16px;height:16px;"></div><div class="a" style="left:1028px;top:109px;width:7px;height:1px;background:#000"></div><div class="a" style="left:1029px;top:108px;width:5px;height:1px;background:#000"></div><div class="a" style="left:1030px;top:107px;width:3px;height:1px;background:#000"></div><div class="a" style="left:1031px;top:106px;width:1px;height:1px;background:#000"></div><div class="btn" style="left:1024px;top:296px;width:16px;height:59px;"></div><div class="btn" style="left:1024px;top:685px;width:16px;height:16px;"></div><div class="a" style="left:1028px;top:691px;width:7px;height:1px;background:#000"></div><div class="a" style="left:1029px;top:692px;width:5px;height:1px;background:#000"></div><div class="a" style="left:1030px;top:693px;width:3px;height:1px;background:#000"></div><div class="a" style="left:1031px;top:694px;width:1px;height:1px;background:#000"></div><div class="a" style="left:252px;top:701px;width:379px;height:1px;background:#000"></div><div class="a" style="left:252px;top:702px;width:379px;height:15px;background:#c8c7c5"></div><div class="a" style="left:315px;top:702px;width:1px;height:15px;background:#808080"></div><div class="a" style="left:258px;top:706px;width:1px;height:8px;background:#000"></div><div class="a" style="left:262.5px;top:706px;width:1px;height:8px;background:#000"></div><div class="a" style="left:261.5px;top:707px;width:1px;height:6px;background:#000"></div><div class="a" style="left:260.5px;top:708px;width:1px;height:4px;background:#000"></div><div class="a" style="left:259.5px;top:709px;width:1px;height:2px;background:#000"></div><div class="a" style="left:278.5px;top:706px;width:1px;height:8px;background:#000"></div><div class="a" style="left:277.5px;top:707px;width:1px;height:6px;background:#000"></div><div class="a" style="left:276.5px;top:708px;width:1px;height:4px;background:#000"></div><div class="a" style="left:275.5px;top:709px;width:1px;height:2px;background:#000"></div><div class="a" style="left:291px;top:706px;width:1px;height:8px;background:#000"></div><div class="a" style="left:292px;top:707px;width:1px;height:6px;background:#000"></div><div class="a" style="left:293px;top:708px;width:1px;height:4px;background:#000"></div><div class="a" style="left:294px;top:709px;width:1px;height:2px;background:#000"></div><div class="a" style="left:306px;top:706px;width:1px;height:8px;background:#000"></div><div class="a" style="left:307px;top:707px;width:1px;height:6px;background:#000"></div><div class="a" style="left:308px;top:708px;width:1px;height:4px;background:#000"></div><div class="a" style="left:309px;top:709px;width:1px;height:2px;background:#000"></div><div class="a" style="left:311px;top:706px;width:1px;height:8px;background:#000"></div><svg style="left:316px;top:701px" width="81" height="17" viewBox="0 0 81 17"><path d="M1 1L8 15.500H72L79 1" fill="#fff" stroke="#000" stroke-width="1"/></svg><div class="t" id="tab" style="left:327px;top:703px;font-size:13px;height:13px;line-height:13px"><span style="letter-spacing:-0.64px">ページ</span><b style="font-weight:normal;padding:0 2px 0 3px">-</b>1</div><div class="btn" style="left:631px;top:701px;width:6px;height:16px;"></div><div class="a chk" style="left:637px;top:701px;width:387px;height:16px;"></div><div class="btn" style="left:637px;top:701px;width:16px;height:16px;"></div><div class="a" style="left:645px;top:705.5px;width:1px;height:7px;background:#000"></div><div class="a" style="left:644px;top:706.5px;width:1px;height:5px;background:#000"></div><div class="a" style="left:643px;top:707.5px;width:1px;height:3px;background:#000"></div><div class="a" style="left:642px;top:708.5px;width:1px;height:1px;background:#000"></div><div class="btn" style="left:801px;top:701px;width:57px;height:16px;"></div><div class="btn" style="left:1008px;top:701px;width:16px;height:16px;"></div><div class="a" style="left:1014.5px;top:705.5px;width:1px;height:7px;background:#000"></div><div class="a" style="left:1015.5px;top:706.5px;width:1px;height:5px;background:#000"></div><div class="a" style="left:1016.5px;top:707.5px;width:1px;height:3px;background:#000"></div><div class="a" style="left:1017.5px;top:708.5px;width:1px;height:1px;background:#000"></div><div class="a" style="left:1024px;top:701px;width:16px;height:16px;background:#c8c7c5"></div>
<div class="sp" style="left:7px;top:722px;width:151px;height:16px;"></div>
<div class="sp" style="left:162px;top:722px;width:151px;height:16px;"></div>
<div class="sp" style="left:317px;top:722px;width:151px;height:16px;"></div>
<div class="sp" style="left:472px;top:722px;width:150px;height:16px;"></div>
<div class="sp" style="left:924px;top:722px;width:100px;height:16px;"></div>
<div class="t" id="page" style="left:947px;top:724px;"><span style="letter-spacing:-1.6px">ページ</span> 1/1</div>
<svg style="left:1029px;top:726px" width="13" height="13"><path d="M12.5 1.5L1.5 12.5M12.5 5.5L5.5 12.5M12.5 9.5L9.5 12.5" stroke="#808080" stroke-width="1.5"/><path d="M12.5 0.5L0.5 12.5M12.5 4.5L4.5 12.5M12.5 8.5L8.5 12.5" stroke="#fff" stroke-width="1"/></svg>
<svg style="left:568px;top:7px" width="12" height="21" viewBox="0 0 12 21"><path d="M0.5 0.5V16.5L4.2 12.8L7.2 19.8L9.6 18.8L6.7 11.9H11.6Z" fill="#fff" stroke="#000" stroke-width="1"/></svg>
</body></html>
